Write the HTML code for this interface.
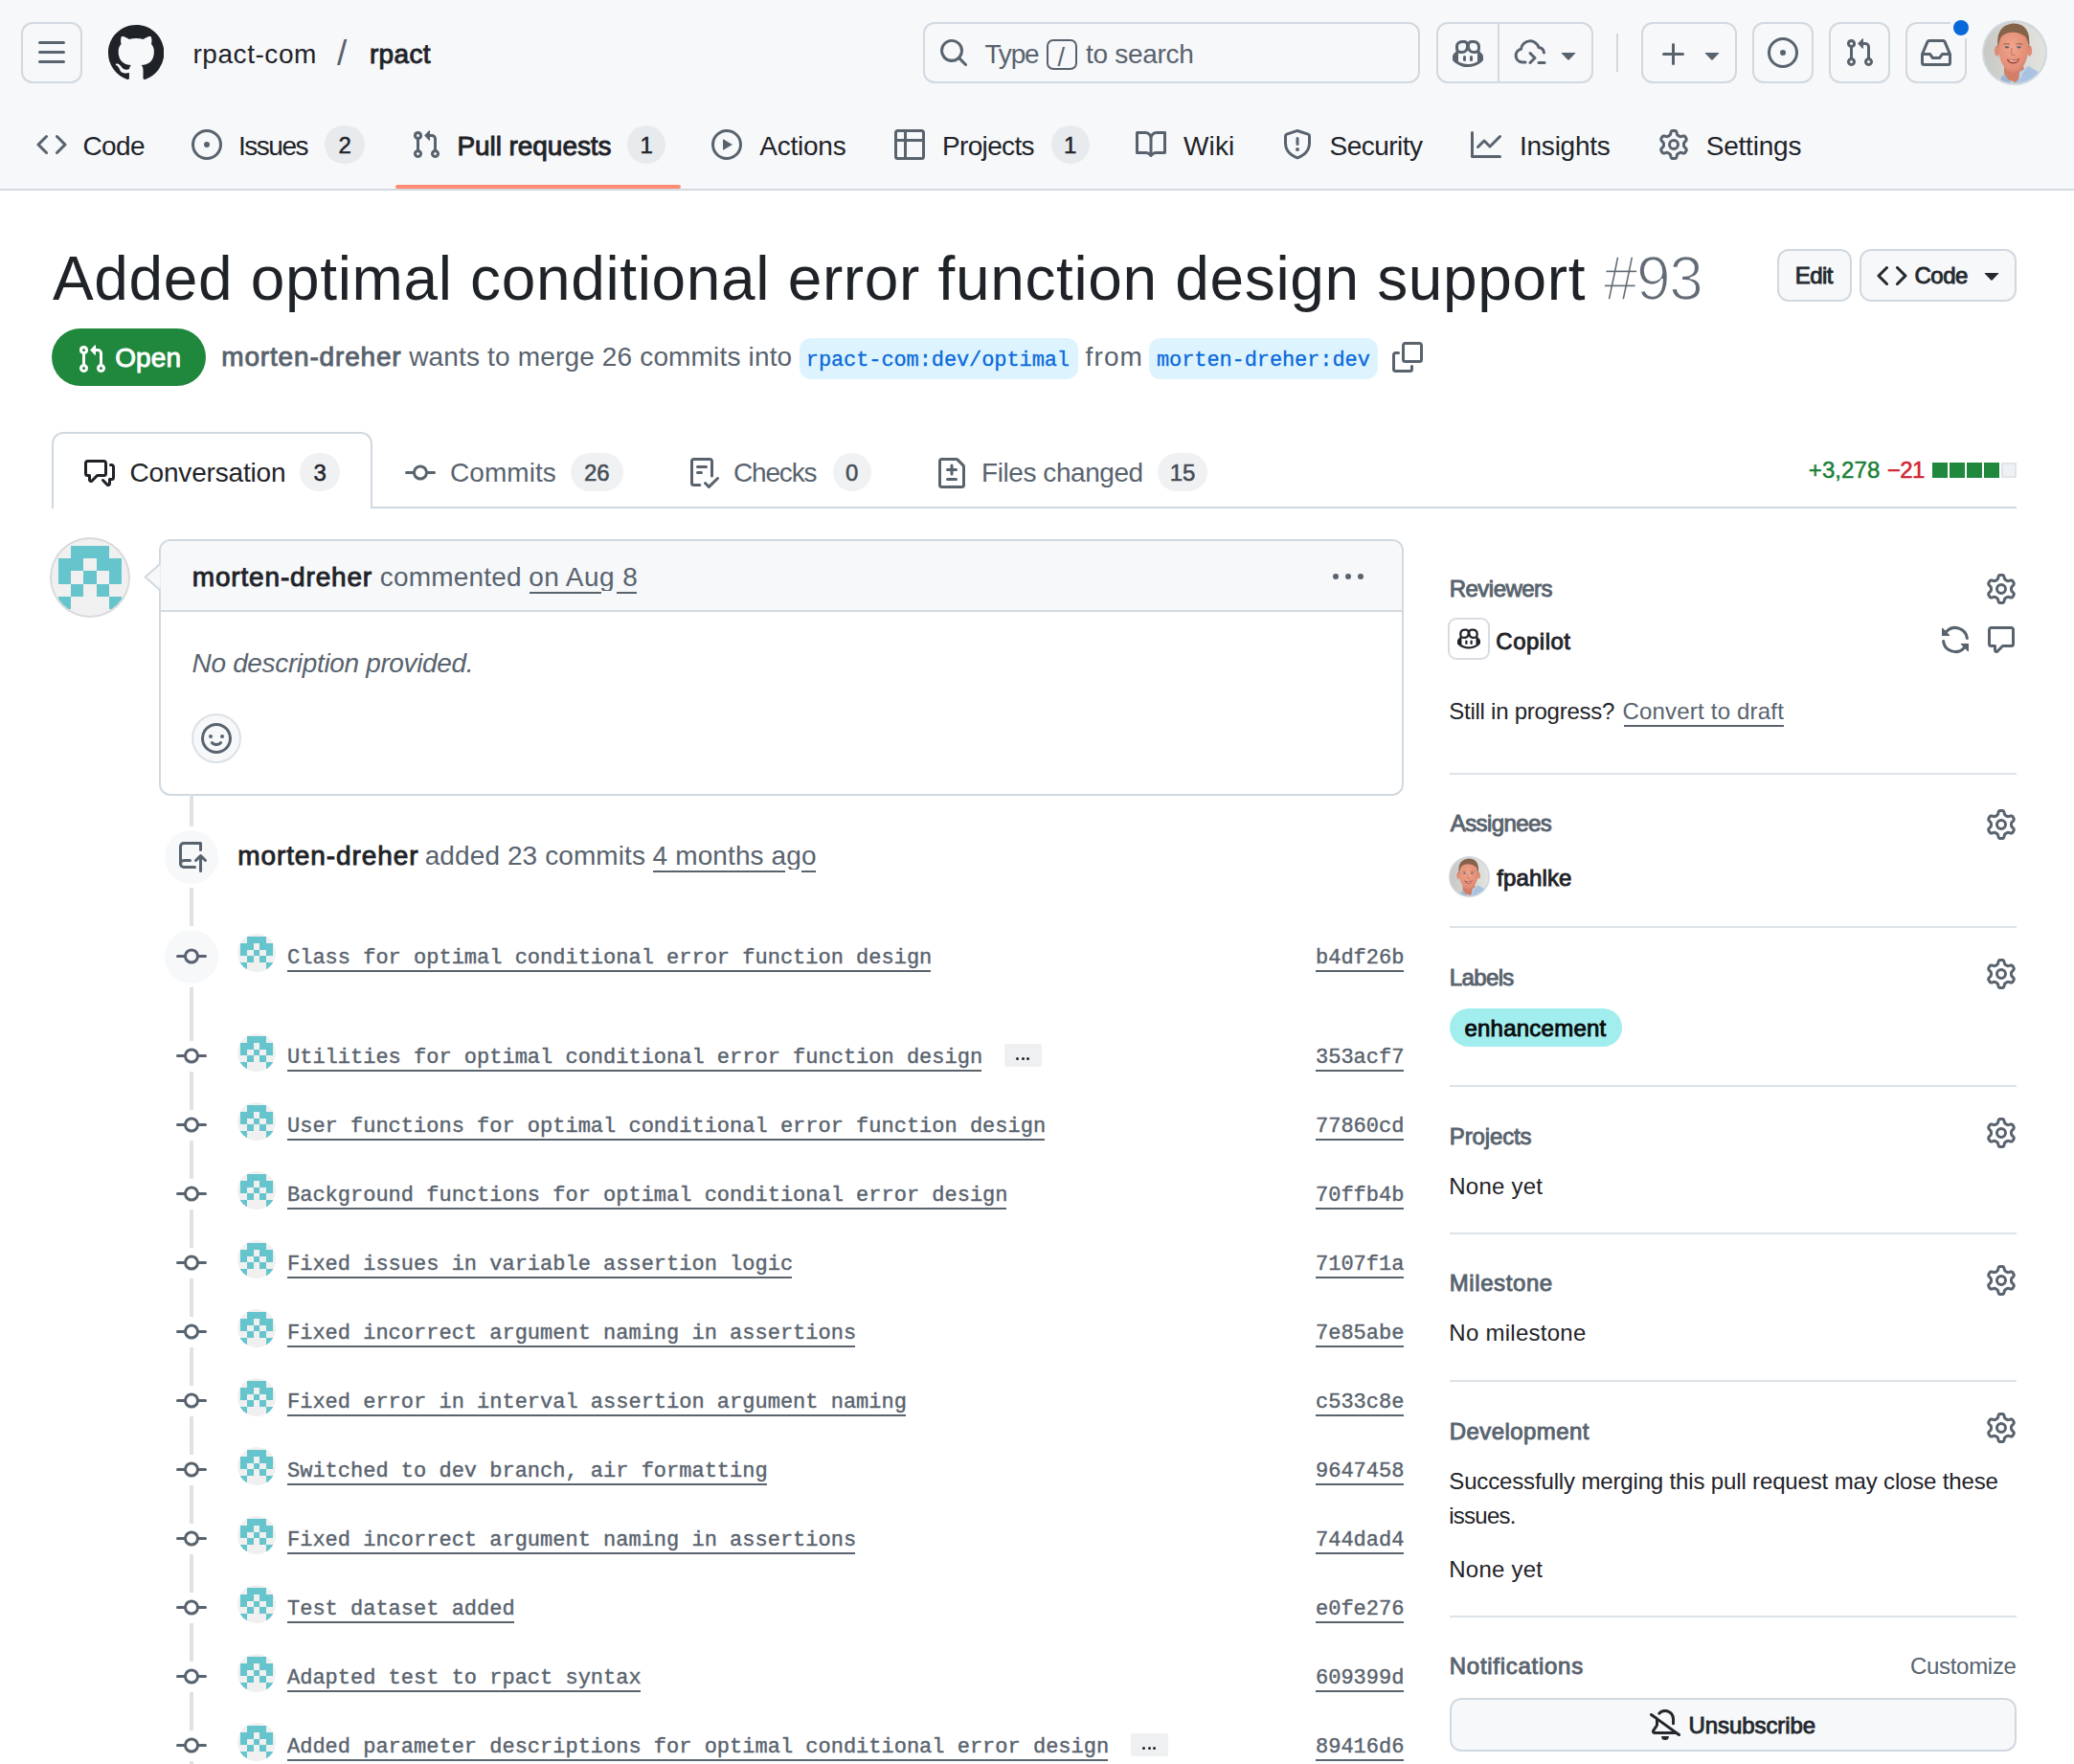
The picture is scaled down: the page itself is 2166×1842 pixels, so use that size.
<!DOCTYPE html>
<html><head><meta charset="utf-8"><title>PR</title><style>html,body{margin:0;padding:0}
body{width:2166px;height:1842px;position:relative;overflow:hidden;background:#fff;font-family:"Liberation Sans",sans-serif}
.b,.i,.t{position:absolute;box-sizing:border-box}
.t{white-space:pre;line-height:1;font-kerning:normal}
</style></head><body>
<div class="b" style="left:0px;top:0px;width:2166px;height:197px;background:#f6f8fa"></div>
<div class="b" style="left:0px;top:197px;width:2166px;height:2px;background:#d1d9e0"></div>
<div class="b" style="left:22px;top:23px;width:64px;height:64px;border:2px solid #d1d9e0;border-radius:12px;background:transparent"></div>
<svg class="i" style="left:38px;top:39px" width="32" height="32" viewBox="0 0 16 16" fill="#59636e"><path fill-rule="evenodd" d="M1 2.75A.75.75 0 0 1 1.75 2h12.5a.75.75 0 0 1 0 1.5H1.75A.75.75 0 0 1 1 2.75Zm0 5A.75.75 0 0 1 1.75 7h12.5a.75.75 0 0 1 0 1.5H1.75A.75.75 0 0 1 1 7.75ZM1.75 12h12.5a.75.75 0 0 1 0 1.5H1.75a.75.75 0 0 1 0-1.5Z"/></svg>
<svg class="i" style="left:112.8px;top:25.7px" width="58.4" height="58.4" viewBox="0 0 16 16" fill="#1f2328"><path fill-rule="evenodd" d="M8 0c4.42 0 8 3.58 8 8a8.013 8.013 0 0 1-5.45 7.59c-.4.08-.55-.17-.55-.38 0-.27.01-1.13.01-2.2 0-.75-.25-1.23-.54-1.48 1.78-.2 3.65-.88 3.65-3.95 0-.88-.31-1.59-.82-2.15.08-.2.36-1.02-.08-2.12 0 0-.67-.22-2.2.82-.64-.18-1.32-.27-2-.27-.68 0-1.36.09-2 .27-1.53-1.03-2.2-.82-2.2-.82-.44 1.1-.16 1.92-.08 2.12-.51.56-.82 1.28-.82 2.15 0 3.06 1.86 3.75 3.64 3.95-.23.2-.44.55-.51 1.07-.46.21-1.61.55-2.33-.66-.15-.24-.6-.83-1.23-.82-.67.01-.27.38.01.53.34.19.73.9.82 1.13.16.45.68 1.31 2.69.94 0 .67.01 1.3.01 1.49 0 .21-.15.45-.55.38A7.995 7.995 0 0 1 0 8c0-4.42 3.58-8 8-8Z"/></svg>
<span class="t" style="left:201.5px;top:42.90px;font-size:28px;color:#1f2328;letter-spacing:0.544px">rpact-com</span>
<span class="t" style="left:352px;top:37.28px;font-size:37px;color:#59636e">/</span>
<span class="t" style="left:385.95px;top:42.90px;font-size:28px;color:#1f2328;-webkit-text-stroke:0.9px #1f2328;letter-spacing:0.358px">rpact</span>
<div class="b" style="left:964px;top:23px;width:519px;height:64px;border:2px solid #d1d9e0;border-radius:12px;background:transparent"></div>
<svg class="i" style="left:980px;top:39px" width="32" height="32" viewBox="0 0 16 16" fill="#59636e"><path fill-rule="evenodd" d="M10.68 11.74a6 6 0 0 1-7.922-8.982 6 6 0 0 1 8.982 7.922l3.04 3.04a.749.749 0 0 1-.326 1.275.749.749 0 0 1-.734-.215ZM11.5 7a4.499 4.499 0 1 0-8.997 0A4.499 4.499 0 0 0 11.5 7Z"/></svg>
<span class="t" style="left:1028.5px;top:42.90px;font-size:28px;color:#59636e;letter-spacing:-1.210px">Type</span>
<div class="b" style="left:1093.2px;top:41px;width:31.6px;height:32px;border:2px solid #59636e;border-radius:7px"></div>
<span class="t" style="left:1104.6px;top:47.14px;font-size:27px;color:#59636e">/</span>
<span class="t" style="left:1133.9px;top:42.90px;font-size:28px;color:#59636e;letter-spacing:-0.275px">to search</span>
<div class="b" style="left:1500px;top:23px;width:164px;height:64px;border:2px solid #d1d9e0;border-radius:12px;background:transparent"></div>
<div class="b" style="left:1564px;top:25px;width:2px;height:60px;background:#d1d9e0"></div>
<svg class="i" style="left:1517px;top:39.5px" width="32" height="32" viewBox="0 0 16 16" fill="#59636e"><path fill-rule="evenodd" d="M7.998 15.035c-4.562 0-7.873-2.914-7.998-3.749V9.338c.085-.628.677-1.686 1.588-2.065.013-.07.024-.143.036-.218.029-.183.06-.384.126-.612-.201-.508-.254-1.084-.254-1.656 0-.87.128-1.769.693-2.484.579-.733 1.494-1.124 2.724-1.261 1.206-.134 2.262.034 2.944.765.05.053.096.108.139.165.044-.057.094-.112.143-.165.682-.731 1.738-.899 2.944-.765 1.23.137 2.145.528 2.724 1.261.566.715.693 1.614.693 2.484 0 .572-.053 1.148-.254 1.656.066.228.098.429.126.612.012.076.024.148.037.218.924.385 1.522 1.471 1.591 2.095v1.872c0 .766-3.351 3.795-8.002 3.795Zm0-1.485c2.28 0 4.584-1.11 5.002-1.433V7.862l-.023-.116c-.49.21-1.075.291-1.727.291-1.146 0-2.059-.327-2.71-.991A3.222 3.222 0 0 1 8 6.303a3.24 3.24 0 0 1-.544.743c-.65.664-1.563.991-2.71.991-.652 0-1.236-.081-1.727-.291l-.023.116v4.255c.419.323 2.722 1.433 5.002 1.433ZM6.762 2.83c-.193-.206-.637-.413-1.682-.297-1.019.113-1.479.404-1.713.7-.247.312-.369.789-.369 1.554 0 .793.129 1.171.308 1.371.162.181.519.379 1.442.379.853 0 1.339-.235 1.638-.54.315-.322.527-.827.617-1.553.117-.935-.037-1.395-.241-1.614Zm4.155-.297c-1.044-.116-1.488.091-1.681.297-.204.219-.359.679-.242 1.614.091.726.303 1.231.618 1.553.299.305.784.54 1.638.54.922 0 1.28-.198 1.442-.379.179-.2.308-.578.308-1.371 0-.765-.123-1.242-.37-1.554-.233-.296-.693-.587-1.713-.7ZM6.25 9.037a.75.75 0 0 1 .75.75v1.501a.75.75 0 0 1-1.5 0V9.787a.75.75 0 0 1 .75-.75Zm4.25.75v1.501a.75.75 0 0 1-1.5 0V9.787a.75.75 0 0 1 1.5 0Z"/></svg>
<svg class="i" style="left:1581px;top:39px" width="34" height="30" viewBox="0 0 34 30" fill="none" stroke="#59636e" stroke-width="3" stroke-linecap="round" stroke-linejoin="round"><path d="M12 26 H9 A7 7 0 0 1 7.500 12.200 A9.500 9.500 0 0 1 26 10.500 A6.500 6.500 0 0 1 31.500 16"/><path d="M17 16.500 L22 21.500 L17 26.500"/><path d="M26 26.500 H32"/></svg>
<svg class="i" style="left:1622px;top:41px" width="32" height="32" viewBox="0 0 16 16" fill="#59636e"><path fill-rule="evenodd" d="m4.427 7.427 3.396 3.396a.25.25 0 0 0 .354 0l3.396-3.396A.25.25 0 0 0 11.396 7H4.604a.25.25 0 0 0-.177.427Z"/></svg>
<div class="b" style="left:1688px;top:35px;width:2px;height:40px;background:#d1d9e0"></div>
<div class="b" style="left:1714px;top:23px;width:100px;height:64px;border:2px solid #d1d9e0;border-radius:12px;background:transparent"></div>
<svg class="i" style="left:1732px;top:41px" width="32" height="32" viewBox="0 0 16 16" fill="#59636e"><path fill-rule="evenodd" d="M7.75 2a.75.75 0 0 1 .75.75V7h4.25a.75.75 0 0 1 0 1.5H8.5v4.25a.75.75 0 0 1-1.500 0V8.5H2.75a.75.75 0 0 1 0-1.5H7V2.75A.75.75 0 0 1 7.750 2Z"/></svg>
<svg class="i" style="left:1772px;top:41px" width="32" height="32" viewBox="0 0 16 16" fill="#59636e"><path fill-rule="evenodd" d="m4.427 7.427 3.396 3.396a.25.25 0 0 0 .354 0l3.396-3.396A.25.25 0 0 0 11.396 7H4.604a.25.25 0 0 0-.177.427Z"/></svg>
<div class="b" style="left:1830px;top:23px;width:64px;height:64px;border:2px solid #d1d9e0;border-radius:12px;background:transparent"></div>
<svg class="i" style="left:1846px;top:39px" width="32" height="32" viewBox="0 0 16 16" fill="#59636e"><path fill-rule="evenodd" d="M8 9.5a1.5 1.5 0 1 0 0-3 1.5 1.5 0 0 0 0 3ZM8 0a8 8 0 1 1 0 16A8 8 0 0 1 8 0ZM1.5 8a6.5 6.5 0 1 0 13 0 6.5 6.5 0 0 0-13 0Z"/></svg>
<div class="b" style="left:1910px;top:23px;width:64px;height:64px;border:2px solid #d1d9e0;border-radius:12px;background:transparent"></div>
<svg class="i" style="left:1926px;top:39px" width="32" height="32" viewBox="0 0 16 16" fill="#59636e"><path fill-rule="evenodd" d="M1.5 3.25a2.25 2.25 0 1 1 3 2.122v5.256a2.251 2.251 0 1 1-1.5 0V5.372A2.25 2.25 0 0 1 1.5 3.25Zm5.677-.177L9.573.677A.25.25 0 0 1 10 .854V2.5h1A2.5 2.5 0 0 1 13.5 5v5.628a2.251 2.251 0 1 1-1.5 0V5a1 1 0 0 0-1-1h-1v1.646a.25.25 0 0 1-.427.177L7.177 3.427a.25.25 0 0 1 0-.354ZM3.75 2.5a.75.75 0 1 0 0 1.5.75.75 0 0 0 0-1.5Zm0 9.5a.75.75 0 1 0 0 1.5.75.75 0 0 0 0-1.5Zm8.25.75a.75.75 0 1 0 1.5 0 .75.75 0 0 0-1.5 0Z"/></svg>
<div class="b" style="left:1990px;top:23px;width:64px;height:64px;border:2px solid #d1d9e0;border-radius:12px;background:transparent"></div>
<svg class="i" style="left:2006px;top:39px" width="32" height="32" viewBox="0 0 16 16" fill="#59636e"><path fill-rule="evenodd" d="M2.8 2.06A1.75 1.75 0 0 1 4.41 1h7.18c.7 0 1.333.417 1.61 1.06l2.74 6.395c.04.093.06.194.06.295v4.5A1.75 1.75 0 0 1 14.25 15H1.75A1.75 1.75 0 0 1 0 13.25v-4.5c0-.101.02-.202.06-.295Zm1.61.44a.25.25 0 0 0-.23.152L1.887 8H4.75a.75.75 0 0 1 .6.3L6.625 10h2.75l1.275-1.7a.75.75 0 0 1 .6-.3h2.863L11.82 2.652a.25.25 0 0 0-.23-.152Zm10.09 7h-2.875l-1.275 1.7a.75.75 0 0 1-.6.3h-3.5a.75.75 0 0 1-.6-.3L4.375 9.5H1.5v3.75c0 .138.112.25.25.25h12.5a.25.25 0 0 0 .25-.25Z"/></svg>
<div class="b" style="left:2036px;top:17px;width:24px;height:24px;background:#f6f8fa;border-radius:50%"></div>
<div class="b" style="left:2040px;top:21px;width:16px;height:16px;background:#0969da;border-radius:50%"></div>
<svg class="i" style="left:2070.0px;top:20.700000000000003px" width="68" height="68" viewBox="-2.0 -2.0 68.0 68.0"><defs><clipPath id="fc1"><circle cx="32" cy="32" r="32"/></clipPath><linearGradient id="fc1g" x1="0" x2="1" y1="0" y2="0"><stop offset="0" stop-color="#c8c8c4"/><stop offset="0.6" stop-color="#d9d9d5"/><stop offset="1" stop-color="#e2e2de"/></linearGradient><radialGradient id="fc1s" cx="0.45" cy="0.4" r="0.7"><stop offset="0" stop-color="#f0a58c"/><stop offset="0.7" stop-color="#e48f77"/><stop offset="1" stop-color="#cf7a64"/></radialGradient><filter id="fc1b" x="-10%" y="-10%" width="120%" height="120%"><feGaussianBlur stdDeviation="0.7"/></filter></defs><circle cx="32" cy="32" r="34.0" fill="#d0d7de"/><g clip-path="url(#fc1)"><rect width="64" height="64" fill="url(#fc1g)"/><g filter="url(#fc1b)"><path d="M38 52 L46.500 46 L57 52.500 L62 66 L26 70 Z" fill="#a9c3e3"/><path d="M15 66 L18.500 57 L23 53 L30 66 Z" fill="#9db6d8"/><path d="M21 45 L41 45 L42.500 53 L33 63 L25 60 L21 53 Z" fill="#d27f66"/><path d="M37 52 L45 47.500 L36 63 Z" fill="#bcd1ea"/><ellipse cx="13.600" cy="30" rx="2.600" ry="5.500" fill="#df8c74"/><ellipse cx="47.600" cy="30" rx="2.600" ry="5.500" fill="#df8c74"/><path d="M15 26 Q14.500 9 30.500 9 Q46.500 9 46 26 Q46.500 38 41 46 Q36 53 31 53 Q25 53 20.500 46 Q15 38 15 26 Z" fill="url(#fc1s)"/><path d="M14.800 28 Q11 4 30 1.600 Q50 1 47 28 Q46 20 43.500 15.500 Q37 10.500 30 10.800 Q22 11 18 15.500 Q15.500 20 14.800 28 Z" fill="#85634b"/><path d="M20.500 23.500 Q23.500 22 27 23.300 M33.500 23.300 Q37 22 40.500 23.500" stroke="#a0705a" stroke-width="1.200" fill="none"/><ellipse cx="24" cy="26.300" rx="2.300" ry="1.100" fill="#56627a"/><ellipse cx="36.500" cy="26.300" rx="2.300" ry="1.100" fill="#56627a"/><path d="M29 27 Q28 33 29.500 34.500 L33 34.500" stroke="#cf7a64" stroke-width="1.200" fill="none"/><path d="M23.500 38.500 Q30.500 41 37.500 38 Q35.500 43.500 30.500 43.500 Q25.500 43.500 23.500 38.500 Z" fill="#a8453d"/><path d="M25.500 39.600 Q30.500 41.300 36 39.400 Q34 41.800 30.500 41.800 Q27 41.800 25.500 39.600 Z" fill="#f1ddd0"/></g></g></svg>
<svg class="i" style="left:38px;top:135px" width="32" height="32" viewBox="0 0 16 16" fill="#59636e"><path fill-rule="evenodd" d="m11.28 3.22 4.25 4.25a.75.75 0 0 1 0 1.06l-4.25 4.25a.749.749 0 0 1-1.275-.326.749.749 0 0 1 .215-.734L13.94 8l-3.72-3.72a.749.749 0 0 1 .326-1.275.749.749 0 0 1 .734.215Zm-6.56 0a.751.751 0 0 1 1.042.018.751.751 0 0 1 .018 1.042L2.06 8l3.72 3.72a.749.749 0 0 1-.326 1.275.749.749 0 0 1-.734-.215L.47 8.53a.75.75 0 0 1 0-1.06Z"/></svg>
<span class="t" style="left:86.4px;top:139.30px;font-size:28px;color:#1f2328;letter-spacing:-0.588px">Code</span>
<svg class="i" style="left:200px;top:135px" width="32" height="32" viewBox="0 0 16 16" fill="#59636e"><path fill-rule="evenodd" d="M8 9.5a1.5 1.5 0 1 0 0-3 1.5 1.5 0 0 0 0 3ZM8 0a8 8 0 1 1 0 16A8 8 0 0 1 8 0ZM1.5 8a6.5 6.5 0 1 0 13 0 6.5 6.5 0 0 0-13 0Z"/></svg>
<span class="t" style="left:249px;top:139.30px;font-size:28px;color:#1f2328;letter-spacing:-1.485px">Issues</span>
<div class="b" style="left:339.4px;top:130.7px;width:41.60000000000002px;height:40px;border-radius:20.0px;background:#e8ebee;text-align:center;line-height:41px;font-size:24px;color:#1f2328;-webkit-text-stroke:0.5px #1f2328">2</div>
<svg class="i" style="left:429px;top:135px" width="32" height="32" viewBox="0 0 16 16" fill="#59636e"><path fill-rule="evenodd" d="M1.5 3.25a2.25 2.25 0 1 1 3 2.122v5.256a2.251 2.251 0 1 1-1.5 0V5.372A2.25 2.25 0 0 1 1.5 3.25Zm5.677-.177L9.573.677A.25.25 0 0 1 10 .854V2.5h1A2.5 2.5 0 0 1 13.5 5v5.628a2.251 2.251 0 1 1-1.5 0V5a1 1 0 0 0-1-1h-1v1.646a.25.25 0 0 1-.427.177L7.177 3.427a.25.25 0 0 1 0-.354ZM3.75 2.5a.75.75 0 1 0 0 1.5.75.75 0 0 0 0-1.5Zm0 9.5a.75.75 0 1 0 0 1.5.75.75 0 0 0 0-1.5Zm8.25.75a.75.75 0 1 0 1.5 0 .75.75 0 0 0-1.5 0Z"/></svg>
<span class="t" style="left:477.45px;top:139.30px;font-size:28px;color:#1f2328;-webkit-text-stroke:0.9px #1f2328;letter-spacing:-0.063px">Pull requests</span>
<div class="b" style="left:655.2px;top:130.7px;width:40.0px;height:40px;border-radius:20.0px;background:#e8ebee;text-align:center;line-height:41px;font-size:24px;color:#1f2328;-webkit-text-stroke:0.5px #1f2328">1</div>
<svg class="i" style="left:743px;top:135px" width="32" height="32" viewBox="0 0 16 16" fill="#59636e"><path fill-rule="evenodd" d="M8 0a8 8 0 1 1 0 16A8 8 0 0 1 8 0ZM1.5 8a6.5 6.5 0 1 0 13 0 6.5 6.5 0 0 0-13 0Zm4.879-2.773 4.264 2.559a.25.25 0 0 1 0 .428l-4.264 2.559A.25.25 0 0 1 6 10.559V5.442a.25.25 0 0 1 .379-.215Z"/></svg>
<span class="t" style="left:793.2px;top:139.30px;font-size:28px;color:#1f2328;letter-spacing:-0.220px">Actions</span>
<svg class="i" style="left:934px;top:135px" width="32" height="32" viewBox="0 0 16 16" fill="#59636e"><path fill-rule="evenodd" d="M0 1.75C0 .784.784 0 1.75 0h12.5C15.216 0 16 .784 16 1.75v12.5A1.75 1.75 0 0 1 14.25 16H1.75A1.75 1.75 0 0 1 0 14.25ZM6.5 6.5v8h7.75a.25.25 0 0 0 .25-.25V6.5Zm8-1.5V1.75a.25.25 0 0 0-.25-.25H6.5V5Zm-13 1.5v7.75c0 .138.112.25.25.25H5v-8ZM5 5V1.5H1.75a.25.25 0 0 0-.25.25V5Z"/></svg>
<span class="t" style="left:984px;top:139.30px;font-size:28px;color:#1f2328;letter-spacing:-0.664px">Projects</span>
<div class="b" style="left:1097.6px;top:130.7px;width:40.200000000000045px;height:40px;border-radius:20.0px;background:#e8ebee;text-align:center;line-height:41px;font-size:24px;color:#1f2328;-webkit-text-stroke:0.5px #1f2328">1</div>
<svg class="i" style="left:1186px;top:135px" width="32" height="32" viewBox="0 0 16 16" fill="#59636e"><path fill-rule="evenodd" d="M0 1.75A.75.75 0 0 1 .75 1h4.253c1.227 0 2.317.59 3 1.501A3.743 3.743 0 0 1 11.006 1h4.245a.75.75 0 0 1 .75.75v10.5a.75.75 0 0 1-.75.75h-4.507a2.25 2.25 0 0 0-1.591.659l-.622.621a.75.75 0 0 1-1.06 0l-.622-.621A2.25 2.25 0 0 0 5.258 13H.75a.75.75 0 0 1-.75-.75Zm7.251 10.324.004-5.073-.002-2.253A2.25 2.25 0 0 0 5.003 2.5H1.5v9h3.757a3.75 3.75 0 0 1 1.994.574ZM8.755 4.75l-.004 7.322a3.752 3.752 0 0 1 1.992-.572H14.5v-9h-3.495a2.25 2.25 0 0 0-2.25 2.25Z"/></svg>
<span class="t" style="left:1236px;top:139.30px;font-size:28px;color:#1f2328;letter-spacing:0.117px">Wiki</span>
<svg class="i" style="left:1339px;top:135px" width="32" height="32" viewBox="0 0 16 16" fill="#59636e"><path fill-rule="evenodd" d="M7.467.133a1.748 1.748 0 0 1 1.066 0l5.25 1.68A1.75 1.75 0 0 1 15 3.48V7c0 1.566-.32 3.182-1.303 4.682-.983 1.498-2.585 2.813-5.032 3.855a1.697 1.697 0 0 1-1.33 0c-2.447-1.042-4.049-2.357-5.032-3.855C1.32 10.182 1 8.566 1 7V3.48a1.75 1.75 0 0 1 1.217-1.667Zm.61 1.429a.25.25 0 0 0-.153 0l-5.25 1.68a.25.25 0 0 0-.174.238V7c0 1.358.275 2.666 1.057 3.86.784 1.194 2.121 2.34 4.366 3.297a.196.196 0 0 0 .154 0c2.245-.956 3.582-2.104 4.366-3.298C13.225 9.666 13.5 8.36 13.5 7V3.48a.251.251 0 0 0-.174-.237l-5.25-1.68ZM8.75 4.75v3a.75.75 0 0 1-1.5 0v-3a.75.75 0 0 1 1.5 0ZM9 10.5a1 1 0 1 1-2 0 1 1 0 0 1 2 0Z"/></svg>
<span class="t" style="left:1388.5px;top:139.30px;font-size:28px;color:#1f2328;letter-spacing:-0.521px">Security</span>
<svg class="i" style="left:1535.7px;top:135px" width="32" height="32" viewBox="0 0 16 16" fill="#59636e"><path fill-rule="evenodd" d="M1.5 1.75V13.5h13.75a.75.75 0 0 1 0 1.5H.75a.75.75 0 0 1-.75-.75V1.75a.75.75 0 0 1 1.5 0Zm14.28 2.53-5.25 5.25a.75.75 0 0 1-1.06 0L7 7.06 4.28 9.78a.751.751 0 0 1-1.042-.018.751.751 0 0 1-.018-1.042l3.25-3.25a.75.75 0 0 1 1.06 0L10 7.94l4.72-4.72a.751.751 0 0 1 1.042.018.751.751 0 0 1 .018 1.042Z"/></svg>
<span class="t" style="left:1587px;top:139.30px;font-size:28px;color:#1f2328;letter-spacing:-0.242px">Insights</span>
<svg class="i" style="left:1731.5px;top:135px" width="32" height="32" viewBox="0 0 16 16" fill="#59636e"><path fill-rule="evenodd" d="M8 0a8.2 8.2 0 0 1 .701.031C9.444.095 9.99.645 10.16 1.29l.288 1.107c.018.066.079.158.212.224.231.114.454.243.668.386.123.082.233.09.299.071l1.103-.303c.644-.176 1.392.021 1.82.63.27.385.506.792.704 1.218.315.675.111 1.422-.364 1.891l-.814.806c-.049.048-.098.147-.088.294.016.257.016.515 0 .772-.01.147.038.246.088.294l.814.806c.475.469.679 1.216.364 1.891a7.977 7.977 0 0 1-.704 1.217c-.428.61-1.176.807-1.82.63l-1.102-.302c-.067-.019-.177-.011-.3.071a5.909 5.909 0 0 1-.668.386c-.133.066-.194.158-.211.224l-.29 1.106c-.168.646-.715 1.196-1.458 1.26a8.006 8.006 0 0 1-1.402 0c-.743-.064-1.289-.614-1.458-1.26l-.289-1.106c-.018-.066-.079-.158-.212-.224a5.738 5.738 0 0 1-.668-.386c-.123-.082-.233-.09-.299-.071l-1.103.303c-.644.176-1.392-.021-1.82-.63a8.12 8.12 0 0 1-.704-1.218c-.315-.675-.111-1.422.363-1.891l.815-.806c.05-.048.098-.147.088-.294a6.214 6.214 0 0 1 0-.772c.01-.147-.038-.246-.088-.294l-.815-.806C.635 6.045.431 5.298.746 4.623a7.92 7.92 0 0 1 .704-1.217c.428-.61 1.176-.807 1.82-.63l1.102.302c.067.019.177.011.3-.071.214-.143.437-.272.668-.386.133-.066.194-.158.211-.224l.29-1.106C6.009.645 6.556.095 7.299.03 7.53.01 7.764 0 8 0Zm-.571 1.525c-.036.003-.108.036-.137.146l-.289 1.105c-.147.561-.549.967-.998 1.189-.173.086-.34.183-.5.29-.417.278-.97.423-1.529.27l-1.103-.303c-.109-.03-.175.016-.195.045-.22.312-.412.644-.573.99-.014.031-.021.11.059.19l.815.806c.411.406.562.957.53 1.456a4.709 4.709 0 0 0 0 .582c.032.499-.119 1.05-.53 1.456l-.815.806c-.081.08-.073.159-.059.19.162.346.353.677.573.989.02.03.085.076.195.046l1.102-.303c.56-.153 1.113-.008 1.53.27.161.107.328.204.501.29.447.222.85.629.997 1.189l.289 1.105c.029.109.101.143.137.146a6.6 6.6 0 0 0 1.142 0c.036-.003.108-.036.137-.146l.289-1.105c.147-.561.549-.967.998-1.189.173-.086.34-.183.5-.29.417-.278.97-.423 1.529-.27l1.103.303c.109.029.175-.016.195-.045.22-.313.411-.644.573-.99.014-.031.021-.11-.059-.19l-.815-.806c-.411-.406-.562-.957-.53-1.456a4.709 4.709 0 0 0 0-.582c-.032-.499.119-1.05.53-1.456l.815-.806c.081-.08.073-.159.059-.19a6.464 6.464 0 0 0-.573-.989c-.02-.03-.085-.076-.195-.046l-1.102.303c-.56.153-1.113.008-1.53-.27a4.44 4.44 0 0 0-.501-.29c-.447-.222-.85-.629-.997-1.189l-.289-1.105c-.029-.11-.101-.143-.137-.146a6.6 6.6 0 0 0-1.142 0ZM11 8a3 3 0 1 1-6 0 3 3 0 0 1 6 0ZM9.5 8a1.5 1.5 0 1 0-3.001.001A1.5 1.5 0 0 0 9.5 8Z"/></svg>
<span class="t" style="left:1781.7px;top:139.30px;font-size:28px;color:#1f2328;letter-spacing:-0.210px">Settings</span>
<div class="b" style="left:413px;top:192.5px;width:298px;height:4.5px;background:#fd8c73;border-radius:4px"></div>
<span class="t" style="left:55px;top:259.02px;font-size:64px;color:#1f2328;letter-spacing:0.651px">Added optimal conditional error function design support</span>
<span class="t" style="left:1674.8px;top:259.02px;font-size:64px;color:#636c76;-webkit-text-stroke:1.7px #fff;letter-spacing:-1.344px">#93</span>
<div class="b" style="left:1856px;top:259.5px;width:78px;height:55px;border:2px solid #d1d9e0;border-radius:12px;background:#f6f8fa"></div>
<span class="t" style="left:1874.8500000000001px;top:275.58px;font-size:24px;color:#25292e;-webkit-text-stroke:0.9px #25292e;letter-spacing:-0.596px">Edit</span>
<div class="b" style="left:1942px;top:259.5px;width:163.5px;height:55px;border:2px solid #d1d9e0;border-radius:12px;background:#f6f8fa"></div>
<svg class="i" style="left:1960.3px;top:271.5px" width="32" height="32" viewBox="0 0 16 16" fill="#25292e"><path fill-rule="evenodd" d="m11.28 3.22 4.25 4.25a.75.75 0 0 1 0 1.06l-4.25 4.25a.749.749 0 0 1-1.275-.326.749.749 0 0 1 .215-.734L13.94 8l-3.72-3.72a.749.749 0 0 1 .326-1.275.749.749 0 0 1 .734.215Zm-6.56 0a.751.751 0 0 1 1.042.018.751.751 0 0 1 .018 1.042L2.06 8l3.72 3.72a.749.749 0 0 1-.326 1.275.749.749 0 0 1-.734-.215L.47 8.53a.75.75 0 0 1 0-1.06Z"/></svg>
<span class="t" style="left:1999.55px;top:275.58px;font-size:24px;color:#25292e;-webkit-text-stroke:0.9px #25292e;letter-spacing:-0.542px">Code</span>
<svg class="i" style="left:2063.7px;top:270.5px" width="32" height="32" viewBox="0 0 16 16" fill="#25292e"><path fill-rule="evenodd" d="m4.427 7.427 3.396 3.396a.25.25 0 0 0 .354 0l3.396-3.396A.25.25 0 0 0 11.396 7H4.604a.25.25 0 0 0-.177.427Z"/></svg>
<div class="b" style="left:54px;top:343px;width:161px;height:60px;background:#1f883d;border-radius:30px"></div>
<svg class="i" style="left:79.6px;top:359.2px" width="32" height="32" viewBox="0 0 16 16" fill="#fff"><path fill-rule="evenodd" d="M1.5 3.25a2.25 2.25 0 1 1 3 2.122v5.256a2.251 2.251 0 1 1-1.5 0V5.372A2.25 2.25 0 0 1 1.5 3.25Zm5.677-.177L9.573.677A.25.25 0 0 1 10 .854V2.5h1A2.5 2.5 0 0 1 13.5 5v5.628a2.251 2.251 0 1 1-1.5 0V5a1 1 0 0 0-1-1h-1v1.646a.25.25 0 0 1-.427.177L7.177 3.427a.25.25 0 0 1 0-.354ZM3.75 2.5a.75.75 0 1 0 0 1.5.75.75 0 0 0 0-1.5Zm0 9.5a.75.75 0 1 0 0 1.5.75.75 0 0 0 0-1.5Zm8.25.75a.75.75 0 1 0 1.5 0 .75.75 0 0 0-1.5 0Z"/></svg>
<span class="t" style="left:120.15px;top:359.80px;font-size:28px;color:#fff;-webkit-text-stroke:0.9px #fff;letter-spacing:0.159px">Open</span>
<span class="t" style="left:231.25px;top:359.30px;font-size:28px;color:#59636e;-webkit-text-stroke:0.9px #59636e;letter-spacing:0.835px">morten-dreher</span>
<span class="t" style="left:427.2px;top:359.30px;font-size:28px;color:#59636e;letter-spacing:0.162px">wants to merge 26 commits into</span>
<div class="b" style="left:834.5px;top:353px;width:291px;height:43px;background:#ddf4ff;border-radius:12px"></div>
<span class="t" style="left:841.8px;top:365.83px;font-size:22px;color:#0969da;-webkit-text-stroke:0.3px #0969da;font-family:'Liberation Mono',monospace;letter-spacing:-0.100px">rpact-com:dev/optimal</span>
<span class="t" style="left:1133.6px;top:359.30px;font-size:28px;color:#59636e;letter-spacing:1.108px">from</span>
<div class="b" style="left:1200px;top:353px;width:239px;height:43px;background:#ddf4ff;border-radius:12px"></div>
<span class="t" style="left:1208px;top:365.83px;font-size:22px;color:#0969da;-webkit-text-stroke:0.3px #0969da;font-family:'Liberation Mono',monospace;letter-spacing:-0.100px">morten-dreher:dev</span>
<svg class="i" style="left:1453.7px;top:356.8px" width="32" height="32" viewBox="0 0 16 16" fill="#59636e"><path fill-rule="evenodd" d="M0 6.75C0 5.784.784 5 1.75 5h1.5a.75.75 0 0 1 0 1.5h-1.5a.25.25 0 0 0-.25.25v7.5c0 .138.112.25.25.25h7.5a.25.25 0 0 0 .25-.25v-1.5a.75.75 0 0 1 1.5 0v1.5A1.75 1.75 0 0 1 9.25 16h-7.5A1.75 1.75 0 0 1 0 14.25ZM5 1.75C5 .784 5.784 0 6.75 0h7.5C15.216 0 16 .784 16 1.75v7.5A1.75 1.75 0 0 1 14.25 11h-7.5A1.75 1.75 0 0 1 5 9.25Zm1.75-.25a.25.25 0 0 0-.25.25v7.5c0 .138.112.25.25.25h7.5a.25.25 0 0 0 .25-.25v-7.5a.25.25 0 0 0-.25-.25Z"/></svg>
<div class="b" style="left:54px;top:528.5px;width:2052px;height:2px;background:#d1d9e0"></div>
<div class="b" style="left:54px;top:451px;width:335px;height:79.5px;background:#fff;border:2px solid #d1d9e0;border-bottom:0;border-radius:12px 12px 0 0"></div>
<svg class="i" style="left:87.7px;top:478px" width="32" height="32" viewBox="0 0 16 16" fill="#1f2328"><path fill-rule="evenodd" d="M1.75 1h8.5c.966 0 1.75.784 1.75 1.75v5.5A1.75 1.75 0 0 1 10.25 10H7.061l-2.574 2.573A1.458 1.458 0 0 1 2 11.543V10h-.25A1.75 1.75 0 0 1 0 8.25v-5.5C0 1.784.784 1 1.75 1ZM1.5 2.75v5.5c0 .138.112.25.25.25h1a.75.75 0 0 1 .75.75v2.19l2.72-2.72a.749.749 0 0 1 .53-.22h3.5a.25.25 0 0 0 .25-.25v-5.5a.25.25 0 0 0-.25-.25h-8.5a.25.25 0 0 0-.25.25Zm13 2a.25.25 0 0 0-.25-.25h-.5a.75.75 0 0 1 0-1.5h.5c.966 0 1.75.784 1.75 1.75v5.5A1.75 1.75 0 0 1 14.25 12H14v1.543a1.458 1.458 0 0 1-2.487 1.03L9.22 12.28a.749.749 0 0 1 .326-1.275.749.749 0 0 1 .734.215l2.22 2.22v-2.19a.75.75 0 0 1 .75-.75h1a.25.25 0 0 0 .25-.25Z"/></svg>
<span class="t" style="left:135.5px;top:480.30px;font-size:28px;color:#1f2328;letter-spacing:-0.173px">Conversation</span>
<div class="b" style="left:313.3px;top:472.7px;width:41.69999999999999px;height:40px;border-radius:20.0px;background:#eff1f3;text-align:center;line-height:41px;font-size:24px;color:#1f2328;-webkit-text-stroke:0.5px #1f2328">3</div>
<svg class="i" style="left:422.7px;top:478px" width="32" height="32" viewBox="0 0 16 16" fill="#59636e"><path fill-rule="evenodd" d="M11.93 8.5a4.002 4.002 0 0 1-7.86 0H.75a.75.75 0 0 1 0-1.5h3.32a4.002 4.002 0 0 1 7.86 0h3.32a.75.75 0 0 1 0 1.5Zm-1.43-.75a2.5 2.5 0 1 0-5 0 2.5 2.5 0 0 0 5 0Z"/></svg>
<span class="t" style="left:470px;top:480.30px;font-size:28px;color:#59636e;letter-spacing:0.060px">Commits</span>
<div class="b" style="left:596px;top:472.7px;width:54.60000000000002px;height:40px;border-radius:20.0px;background:#eff1f3;text-align:center;line-height:41px;font-size:24px;color:#454c54;-webkit-text-stroke:0.5px #454c54">26</div>
<svg class="i" style="left:718.6px;top:478px" width="32" height="32" viewBox="0 0 16 16" fill="#59636e"><path fill-rule="evenodd" d="M2.5 1.75v11.5c0 .138.112.25.25.25h3.17a.75.75 0 0 1 0 1.5H2.75A1.75 1.75 0 0 1 1 13.25V1.75C1 .784 1.784 0 2.75 0h8.5C12.216 0 13 .784 13 1.75v7.736a.75.75 0 0 1-1.5 0V1.75a.25.25 0 0 0-.25-.25h-8.5a.25.25 0 0 0-.25.25Zm13.274 9.537v-.001l-4.557 4.45a.75.75 0 0 1-1.055-.008l-1.943-1.95a.75.75 0 0 1 1.062-1.058l1.419 1.425 4.026-3.932a.75.75 0 1 1 1.048 1.074ZM4.75 4h4.5a.75.75 0 0 1 0 1.5h-4.5a.75.75 0 0 1 0-1.5ZM4 7.75A.75.75 0 0 1 4.750 7h2a.75.75 0 0 1 0 1.5h-2A.75.75 0 0 1 4 7.75Z"/></svg>
<span class="t" style="left:765.9px;top:480.30px;font-size:28px;color:#59636e;letter-spacing:-1.133px">Checks</span>
<div class="b" style="left:869.5px;top:472.7px;width:40.200000000000045px;height:40px;border-radius:20.0px;background:#eff1f3;text-align:center;line-height:41px;font-size:24px;color:#454c54;-webkit-text-stroke:0.5px #454c54">0</div>
<svg class="i" style="left:977.6px;top:478px" width="32" height="32" viewBox="0 0 16 16" fill="#59636e"><path fill-rule="evenodd" d="M1 1.75C1 .784 1.784 0 2.75 0h7.586c.464 0 .909.184 1.237.513l2.914 2.914c.329.328.513.773.513 1.237v9.586A1.75 1.75 0 0 1 13.25 16H2.75A1.75 1.75 0 0 1 1 14.25Zm1.75-.25a.25.25 0 0 0-.25.25v12.5c0 .138.112.25.25.25h10.5a.25.25 0 0 0 .25-.25V4.664a.25.25 0 0 0-.073-.177l-2.914-2.914a.25.25 0 0 0-.177-.073ZM8 3.25a.75.75 0 0 1 .75.75v1.5h1.5a.75.75 0 0 1 0 1.5h-1.5v1.5a.75.75 0 0 1-1.5 0V7h-1.5a.75.75 0 0 1 0-1.5h1.5V4A.75.75 0 0 1 8 3.25Zm-3 8a.75.75 0 0 1 .75-.75h4.5a.75.75 0 0 1 0 1.5h-4.5a.75.75 0 0 1-.75-.75Z"/></svg>
<span class="t" style="left:1025.1px;top:480.30px;font-size:28px;color:#59636e;letter-spacing:-0.438px">Files changed</span>
<div class="b" style="left:1209.4px;top:472.7px;width:51.299999999999955px;height:40px;border-radius:20.0px;background:#eff1f3;text-align:center;line-height:41px;font-size:24px;color:#454c54;-webkit-text-stroke:0.5px #454c54">15</div>
<span class="t" style="left:1888.8px;top:478.58px;font-size:24px;color:#1a7f37;-webkit-text-stroke:0.5px #1a7f37;letter-spacing:0.095px">+3,278</span>
<span class="t" style="left:1970.8px;top:478.58px;font-size:24px;color:#d1242f;-webkit-text-stroke:0.5px #d1242f;letter-spacing:-0.582px">−21</span>
<div class="b" style="left:2017.7px;top:482.5px;width:16px;height:16px;background:#1f883d"></div>
<div class="b" style="left:2035.7px;top:482.5px;width:16px;height:16px;background:#1f883d"></div>
<div class="b" style="left:2053.7px;top:482.5px;width:16px;height:16px;background:#1f883d"></div>
<div class="b" style="left:2071.7px;top:482.5px;width:16px;height:16px;background:#1f883d"></div>
<div class="b" style="left:2089.7px;top:482.5px;width:16px;height:16px;background:#eff2f5;border:2px solid #e0e4e9"></div>
<svg class="i" style="left:52.2px;top:561.3px" width="84" height="84" viewBox="-10.5 -10.5 441.0 441.0"><defs><clipPath id="ic2"><circle cx="210" cy="210" r="210"/></clipPath></defs><circle cx="210" cy="210" r="220.5" fill="#d9dadb"/><g clip-path="url(#ic2)"><rect width="420" height="420" fill="#f0f0f0"/><g fill="#66c4cc" shape-rendering="crispEdges"><rect x="105" y="35" width="70.5" height="70.5"/><rect x="175" y="35" width="70.5" height="70.5"/><rect x="245" y="35" width="70.5" height="70.5"/><rect x="35" y="105" width="70.5" height="70.5"/><rect x="105" y="105" width="70.5" height="70.5"/><rect x="245" y="105" width="70.5" height="70.5"/><rect x="315" y="105" width="70.5" height="70.5"/><rect x="35" y="175" width="70.5" height="70.5"/><rect x="175" y="175" width="70.5" height="70.5"/><rect x="315" y="175" width="70.5" height="70.5"/><rect x="105" y="245" width="70.5" height="70.5"/><rect x="245" y="245" width="70.5" height="70.5"/><rect x="35" y="315" width="70.5" height="70.5"/><rect x="315" y="315" width="70.5" height="70.5"/></g></g></svg>
<div class="b" style="left:166px;top:563px;width:1300px;height:268px;border:2px solid #d1d9e0;border-radius:12px;background:#fff"></div>
<div class="b" style="left:168px;top:565px;width:1296px;height:72px;background:#f6f8fa;border-radius:10px 10px 0 0"></div>
<div class="b" style="left:168px;top:636.5px;width:1296px;height:2px;background:#d1d9e0"></div>
<svg class="i" style="left:149.4px;top:586px" width="20" height="34" viewBox="0 0 20 34"><path d="M18.600 3.500 L3.600 16.600 L18.600 29.800 Z" fill="#f6f8fa"/><path d="M17.600 3.500 L2.600 16.600 L17.600 29.800" fill="none" stroke="#d1d9e0" stroke-width="2"/></svg>
<span class="t" style="left:200.75px;top:588.70px;font-size:28px;color:#1f2328;-webkit-text-stroke:0.9px #1f2328;letter-spacing:0.835px">morten-dreher</span>
<span class="t" style="left:396.8px;top:588.70px;font-size:28px;color:#59636e;letter-spacing:0.198px">commented</span>
<span class="t" style="left:552.2px;top:588.70px;font-size:28px;color:#59636e;letter-spacing:0.425px">on Aug 8</span>
<div class="b" style="left:552.7px;top:617.5px;width:112.7px;height:2px;background:#59636e"></div>
<div class="b" style="left:627.6px;top:617px;width:16.4px;height:3px;background:#f6f8fa"></div>
<svg class="i" style="left:1392px;top:586.7px" width="32" height="32" viewBox="0 0 16 16" fill="#59636e"><path fill-rule="evenodd" d="M8 9a1.5 1.5 0 1 0 0-3 1.5 1.5 0 0 0 0 3ZM1.5 9a1.5 1.5 0 1 0 0-3 1.5 1.5 0 0 0 0 3Zm13 0a1.5 1.5 0 1 0 0-3 1.5 1.5 0 0 0 0 3Z"/></svg>
<span class="t" style="left:200.6px;top:679.30px;font-size:28px;color:#59636e;font-style:italic;letter-spacing:-0.346px">No description provided.</span>
<div class="b" style="left:200px;top:745px;width:52px;height:52px;border:2px solid #dce1e6;border-radius:50%;background:#f6f8fa"></div>
<svg class="i" style="left:209.8px;top:755px" width="32" height="32" viewBox="0 0 16 16" fill="#59636e"><path fill-rule="evenodd" d="M8 0a8 8 0 1 1 0 16A8 8 0 0 1 8 0ZM1.5 8a6.5 6.5 0 1 0 13 0 6.5 6.5 0 0 0-13 0Zm3.82 1.636a.75.75 0 0 1 1.038.175l.007.009c.103.118.22.222.35.31.264.178.683.37 1.285.37.602 0 1.02-.192 1.285-.371.13-.088.247-.192.35-.31l.007-.008a.75.75 0 0 1 1.222.87l-.022-.015c.02.013.021.015.021.015v.001l-.001.002-.002.003-.005.007-.014.019a2.066 2.066 0 0 1-.184.213c-.16.166-.338.316-.53.445-.63.418-1.37.638-2.127.629-.946 0-1.652-.308-2.126-.63a3.331 3.331 0 0 1-.715-.657l-.014-.02-.005-.006-.002-.003v-.002h-.001l.613-.432-.614.43a.75.75 0 0 1 .183-1.044ZM12 7a1 1 0 1 1-2 0 1 1 0 0 1 2 0ZM5 8a1 1 0 1 1 0-2 1 1 0 0 1 0 2Z"/></svg>
<div class="b" style="left:198px;top:830px;width:4px;height:1012px;background:#dde2e7"></div>
<div class="b" style="left:168px;top:863px;width:64px;height:64px;background:#f6f8fa;border:4px solid #fff;border-radius:50%"></div>
<svg class="i" style="left:184.5px;top:879px" width="32" height="32" viewBox="0 0 16 16" fill="#59636e"><path fill-rule="evenodd" d="M1 2.5A2.5 2.5 0 0 1 3.5 0h8.75a.75.75 0 0 1 .75.75v3.5a.75.75 0 0 1-1.5 0V1.5h-8a1 1 0 0 0-1 1v6.708A2.493 2.493 0 0 1 3.5 9h3.25a.75.75 0 0 1 0 1.5H3.5a1 1 0 0 0 0 2h5.75a.75.75 0 0 1 0 1.5H3.5A2.5 2.5 0 0 1 1 11.5Zm13.23 7.79h-.001l-1.224-1.224v6.184a.75.75 0 0 1-1.5 0V9.066L10.28 10.29a.75.75 0 0 1-1.06-1.061l2.505-2.504a.75.75 0 0 1 1.06 0L15.29 9.23a.751.751 0 0 1-.018 1.042.751.751 0 0 1-1.042.018Z"/></svg>
<span class="t" style="left:248.25px;top:879.90px;font-size:28px;color:#1f2328;-webkit-text-stroke:0.9px #1f2328;letter-spacing:0.901px">morten-dreher</span>
<span class="t" style="left:443.7px;top:879.90px;font-size:28px;color:#59636e;letter-spacing:0.101px">added 23 commits</span>
<span class="t" style="left:681.6px;top:879.90px;font-size:28px;color:#59636e;letter-spacing:0.119px">4 months ago</span>
<div class="b" style="left:681.6px;top:908.7px;width:170.4px;height:2px;background:#59636e"></div>
<div class="b" style="left:820px;top:908px;width:16.6px;height:3px;background:#fff"></div>
<div class="b" style="left:168px;top:966.5px;width:64px;height:64px;background:#f6f8fa;border:4px solid #fff;border-radius:50%"></div>
<svg class="i" style="left:184px;top:983.0px" width="32" height="32" viewBox="0 0 16 16" fill="#59636e"><path fill-rule="evenodd" d="M11.93 8.5a4.002 4.002 0 0 1-7.86 0H.75a.75.75 0 0 1 0-1.5h3.32a4.002 4.002 0 0 1 7.86 0h3.32a.75.75 0 0 1 0 1.5Zm-1.43-.75a2.5 2.5 0 1 0-5 0 2.5 2.5 0 0 0 5 0Z"/></svg>
<svg class="i" style="left:247.8px;top:975.1px" width="40" height="40" viewBox="0.0 0.0 420.0 420.0"><defs><clipPath id="ic3"><circle cx="210" cy="210" r="210"/></clipPath></defs><g clip-path="url(#ic3)"><rect width="420" height="420" fill="#f0f0f0"/><g fill="#66c4cc" shape-rendering="crispEdges"><rect x="105" y="35" width="70.5" height="70.5"/><rect x="175" y="35" width="70.5" height="70.5"/><rect x="245" y="35" width="70.5" height="70.5"/><rect x="35" y="105" width="70.5" height="70.5"/><rect x="105" y="105" width="70.5" height="70.5"/><rect x="245" y="105" width="70.5" height="70.5"/><rect x="315" y="105" width="70.5" height="70.5"/><rect x="35" y="175" width="70.5" height="70.5"/><rect x="175" y="175" width="70.5" height="70.5"/><rect x="315" y="175" width="70.5" height="70.5"/><rect x="105" y="245" width="70.5" height="70.5"/><rect x="245" y="245" width="70.5" height="70.5"/><rect x="35" y="315" width="70.5" height="70.5"/><rect x="315" y="315" width="70.5" height="70.5"/></g></g></svg>
<span class="t" style="left:300px;top:990.33px;font-size:22px;color:#59636e;-webkit-text-stroke:0.4px #59636e;font-family:'Liberation Mono',monospace">Class for optimal conditional error function design</span>
<div class="b" style="left:300px;top:1013.0px;width:672.1999999999999px;height:2px;background:#59636e"></div>
<span class="t" style="left:1374px;top:990.33px;font-size:22px;color:#59636e;-webkit-text-stroke:0.4px #59636e;font-family:'Liberation Mono',monospace">b4df26b</span>
<div class="b" style="left:1374px;top:1013.0px;width:91.89999999999999px;height:2px;background:#59636e"></div>
<div class="b" style="left:184px;top:1086.6px;width:32px;height:32px;background:#fff"></div>
<svg class="i" style="left:184px;top:1087.1px" width="32" height="32" viewBox="0 0 16 16" fill="#59636e"><path fill-rule="evenodd" d="M11.93 8.5a4.002 4.002 0 0 1-7.86 0H.75a.75.75 0 0 1 0-1.5h3.32a4.002 4.002 0 0 1 7.86 0h3.32a.75.75 0 0 1 0 1.5Zm-1.43-.75a2.5 2.5 0 1 0-5 0 2.5 2.5 0 0 0 5 0Z"/></svg>
<svg class="i" style="left:247.8px;top:1079.1999999999998px" width="40" height="40" viewBox="0.0 0.0 420.0 420.0"><defs><clipPath id="ic4"><circle cx="210" cy="210" r="210"/></clipPath></defs><g clip-path="url(#ic4)"><rect width="420" height="420" fill="#f0f0f0"/><g fill="#66c4cc" shape-rendering="crispEdges"><rect x="105" y="35" width="70.5" height="70.5"/><rect x="175" y="35" width="70.5" height="70.5"/><rect x="245" y="35" width="70.5" height="70.5"/><rect x="35" y="105" width="70.5" height="70.5"/><rect x="105" y="105" width="70.5" height="70.5"/><rect x="245" y="105" width="70.5" height="70.5"/><rect x="315" y="105" width="70.5" height="70.5"/><rect x="35" y="175" width="70.5" height="70.5"/><rect x="175" y="175" width="70.5" height="70.5"/><rect x="315" y="175" width="70.5" height="70.5"/><rect x="105" y="245" width="70.5" height="70.5"/><rect x="245" y="245" width="70.5" height="70.5"/><rect x="35" y="315" width="70.5" height="70.5"/><rect x="315" y="315" width="70.5" height="70.5"/></g></g></svg>
<span class="t" style="left:300px;top:1094.43px;font-size:22px;color:#59636e;-webkit-text-stroke:0.4px #59636e;font-family:'Liberation Mono',monospace">Utilities for optimal conditional error function design</span>
<div class="b" style="left:300px;top:1117.1px;width:725.0px;height:2px;background:#59636e"></div>
<div class="b" style="left:1049.0px;top:1090.1px;width:39px;height:24px;background:#eef0f2;border-radius:2px"></div>
<div class="b" style="left:1061.0px;top:1104.1px;width:3.2px;height:3.2px;background:#1f2328;border-radius:50%"></div>
<div class="b" style="left:1066.5px;top:1104.1px;width:3.2px;height:3.2px;background:#1f2328;border-radius:50%"></div>
<div class="b" style="left:1072.0px;top:1104.1px;width:3.2px;height:3.2px;background:#1f2328;border-radius:50%"></div>
<span class="t" style="left:1374px;top:1094.43px;font-size:22px;color:#59636e;-webkit-text-stroke:0.4px #59636e;font-family:'Liberation Mono',monospace">353acf7</span>
<div class="b" style="left:1374px;top:1117.1px;width:91.89999999999999px;height:2px;background:#59636e"></div>
<div class="b" style="left:184px;top:1158.6px;width:32px;height:32px;background:#fff"></div>
<svg class="i" style="left:184px;top:1159.1px" width="32" height="32" viewBox="0 0 16 16" fill="#59636e"><path fill-rule="evenodd" d="M11.93 8.5a4.002 4.002 0 0 1-7.86 0H.75a.75.75 0 0 1 0-1.5h3.32a4.002 4.002 0 0 1 7.86 0h3.32a.75.75 0 0 1 0 1.5Zm-1.43-.75a2.5 2.5 0 1 0-5 0 2.5 2.5 0 0 0 5 0Z"/></svg>
<svg class="i" style="left:247.8px;top:1151.1999999999998px" width="40" height="40" viewBox="0.0 0.0 420.0 420.0"><defs><clipPath id="ic5"><circle cx="210" cy="210" r="210"/></clipPath></defs><g clip-path="url(#ic5)"><rect width="420" height="420" fill="#f0f0f0"/><g fill="#66c4cc" shape-rendering="crispEdges"><rect x="105" y="35" width="70.5" height="70.5"/><rect x="175" y="35" width="70.5" height="70.5"/><rect x="245" y="35" width="70.5" height="70.5"/><rect x="35" y="105" width="70.5" height="70.5"/><rect x="105" y="105" width="70.5" height="70.5"/><rect x="245" y="105" width="70.5" height="70.5"/><rect x="315" y="105" width="70.5" height="70.5"/><rect x="35" y="175" width="70.5" height="70.5"/><rect x="175" y="175" width="70.5" height="70.5"/><rect x="315" y="175" width="70.5" height="70.5"/><rect x="105" y="245" width="70.5" height="70.5"/><rect x="245" y="245" width="70.5" height="70.5"/><rect x="35" y="315" width="70.5" height="70.5"/><rect x="315" y="315" width="70.5" height="70.5"/></g></g></svg>
<span class="t" style="left:300px;top:1166.43px;font-size:22px;color:#59636e;-webkit-text-stroke:0.4px #59636e;font-family:'Liberation Mono',monospace">User functions for optimal conditional error function design</span>
<div class="b" style="left:300px;top:1189.1px;width:791.0px;height:2px;background:#59636e"></div>
<span class="t" style="left:1374px;top:1166.43px;font-size:22px;color:#59636e;-webkit-text-stroke:0.4px #59636e;font-family:'Liberation Mono',monospace">77860cd</span>
<div class="b" style="left:1374px;top:1189.1px;width:91.89999999999999px;height:2px;background:#59636e"></div>
<div class="b" style="left:184px;top:1230.6px;width:32px;height:32px;background:#fff"></div>
<svg class="i" style="left:184px;top:1231.1px" width="32" height="32" viewBox="0 0 16 16" fill="#59636e"><path fill-rule="evenodd" d="M11.93 8.5a4.002 4.002 0 0 1-7.86 0H.75a.75.75 0 0 1 0-1.5h3.32a4.002 4.002 0 0 1 7.86 0h3.32a.75.75 0 0 1 0 1.5Zm-1.43-.75a2.5 2.5 0 1 0-5 0 2.5 2.5 0 0 0 5 0Z"/></svg>
<svg class="i" style="left:247.8px;top:1223.1999999999998px" width="40" height="40" viewBox="0.0 0.0 420.0 420.0"><defs><clipPath id="ic6"><circle cx="210" cy="210" r="210"/></clipPath></defs><g clip-path="url(#ic6)"><rect width="420" height="420" fill="#f0f0f0"/><g fill="#66c4cc" shape-rendering="crispEdges"><rect x="105" y="35" width="70.5" height="70.5"/><rect x="175" y="35" width="70.5" height="70.5"/><rect x="245" y="35" width="70.5" height="70.5"/><rect x="35" y="105" width="70.5" height="70.5"/><rect x="105" y="105" width="70.5" height="70.5"/><rect x="245" y="105" width="70.5" height="70.5"/><rect x="315" y="105" width="70.5" height="70.5"/><rect x="35" y="175" width="70.5" height="70.5"/><rect x="175" y="175" width="70.5" height="70.5"/><rect x="315" y="175" width="70.5" height="70.5"/><rect x="105" y="245" width="70.5" height="70.5"/><rect x="245" y="245" width="70.5" height="70.5"/><rect x="35" y="315" width="70.5" height="70.5"/><rect x="315" y="315" width="70.5" height="70.5"/></g></g></svg>
<span class="t" style="left:300px;top:1238.43px;font-size:22px;color:#59636e;-webkit-text-stroke:0.4px #59636e;font-family:'Liberation Mono',monospace">Background functions for optimal conditional error design</span>
<div class="b" style="left:300px;top:1261.1px;width:751.4px;height:2px;background:#59636e"></div>
<span class="t" style="left:1374px;top:1238.43px;font-size:22px;color:#59636e;-webkit-text-stroke:0.4px #59636e;font-family:'Liberation Mono',monospace">70ffb4b</span>
<div class="b" style="left:1374px;top:1261.1px;width:91.89999999999999px;height:2px;background:#59636e"></div>
<div class="b" style="left:184px;top:1302.6px;width:32px;height:32px;background:#fff"></div>
<svg class="i" style="left:184px;top:1303.1px" width="32" height="32" viewBox="0 0 16 16" fill="#59636e"><path fill-rule="evenodd" d="M11.93 8.5a4.002 4.002 0 0 1-7.86 0H.75a.75.75 0 0 1 0-1.5h3.32a4.002 4.002 0 0 1 7.86 0h3.32a.75.75 0 0 1 0 1.5Zm-1.43-.75a2.5 2.5 0 1 0-5 0 2.5 2.5 0 0 0 5 0Z"/></svg>
<svg class="i" style="left:247.8px;top:1295.1999999999998px" width="40" height="40" viewBox="0.0 0.0 420.0 420.0"><defs><clipPath id="ic7"><circle cx="210" cy="210" r="210"/></clipPath></defs><g clip-path="url(#ic7)"><rect width="420" height="420" fill="#f0f0f0"/><g fill="#66c4cc" shape-rendering="crispEdges"><rect x="105" y="35" width="70.5" height="70.5"/><rect x="175" y="35" width="70.5" height="70.5"/><rect x="245" y="35" width="70.5" height="70.5"/><rect x="35" y="105" width="70.5" height="70.5"/><rect x="105" y="105" width="70.5" height="70.5"/><rect x="245" y="105" width="70.5" height="70.5"/><rect x="315" y="105" width="70.5" height="70.5"/><rect x="35" y="175" width="70.5" height="70.5"/><rect x="175" y="175" width="70.5" height="70.5"/><rect x="315" y="175" width="70.5" height="70.5"/><rect x="105" y="245" width="70.5" height="70.5"/><rect x="245" y="245" width="70.5" height="70.5"/><rect x="35" y="315" width="70.5" height="70.5"/><rect x="315" y="315" width="70.5" height="70.5"/></g></g></svg>
<span class="t" style="left:300px;top:1310.43px;font-size:22px;color:#59636e;-webkit-text-stroke:0.4px #59636e;font-family:'Liberation Mono',monospace">Fixed issues in variable assertion logic</span>
<div class="b" style="left:300px;top:1333.1px;width:527.0px;height:2px;background:#59636e"></div>
<span class="t" style="left:1374px;top:1310.43px;font-size:22px;color:#59636e;-webkit-text-stroke:0.4px #59636e;font-family:'Liberation Mono',monospace">7107f1a</span>
<div class="b" style="left:1374px;top:1333.1px;width:91.89999999999999px;height:2px;background:#59636e"></div>
<div class="b" style="left:184px;top:1374.6px;width:32px;height:32px;background:#fff"></div>
<svg class="i" style="left:184px;top:1375.1px" width="32" height="32" viewBox="0 0 16 16" fill="#59636e"><path fill-rule="evenodd" d="M11.93 8.5a4.002 4.002 0 0 1-7.86 0H.75a.75.75 0 0 1 0-1.5h3.32a4.002 4.002 0 0 1 7.86 0h3.32a.75.75 0 0 1 0 1.5Zm-1.43-.75a2.5 2.5 0 1 0-5 0 2.5 2.5 0 0 0 5 0Z"/></svg>
<svg class="i" style="left:247.8px;top:1367.1999999999998px" width="40" height="40" viewBox="0.0 0.0 420.0 420.0"><defs><clipPath id="ic8"><circle cx="210" cy="210" r="210"/></clipPath></defs><g clip-path="url(#ic8)"><rect width="420" height="420" fill="#f0f0f0"/><g fill="#66c4cc" shape-rendering="crispEdges"><rect x="105" y="35" width="70.5" height="70.5"/><rect x="175" y="35" width="70.5" height="70.5"/><rect x="245" y="35" width="70.5" height="70.5"/><rect x="35" y="105" width="70.5" height="70.5"/><rect x="105" y="105" width="70.5" height="70.5"/><rect x="245" y="105" width="70.5" height="70.5"/><rect x="315" y="105" width="70.5" height="70.5"/><rect x="35" y="175" width="70.5" height="70.5"/><rect x="175" y="175" width="70.5" height="70.5"/><rect x="315" y="175" width="70.5" height="70.5"/><rect x="105" y="245" width="70.5" height="70.5"/><rect x="245" y="245" width="70.5" height="70.5"/><rect x="35" y="315" width="70.5" height="70.5"/><rect x="315" y="315" width="70.5" height="70.5"/></g></g></svg>
<span class="t" style="left:300px;top:1382.43px;font-size:22px;color:#59636e;-webkit-text-stroke:0.4px #59636e;font-family:'Liberation Mono',monospace">Fixed incorrect argument naming in assertions</span>
<div class="b" style="left:300px;top:1405.1px;width:593.0px;height:2px;background:#59636e"></div>
<span class="t" style="left:1374px;top:1382.43px;font-size:22px;color:#59636e;-webkit-text-stroke:0.4px #59636e;font-family:'Liberation Mono',monospace">7e85abe</span>
<div class="b" style="left:1374px;top:1405.1px;width:91.89999999999999px;height:2px;background:#59636e"></div>
<div class="b" style="left:184px;top:1446.6px;width:32px;height:32px;background:#fff"></div>
<svg class="i" style="left:184px;top:1447.1px" width="32" height="32" viewBox="0 0 16 16" fill="#59636e"><path fill-rule="evenodd" d="M11.93 8.5a4.002 4.002 0 0 1-7.86 0H.75a.75.75 0 0 1 0-1.5h3.32a4.002 4.002 0 0 1 7.86 0h3.32a.75.75 0 0 1 0 1.5Zm-1.43-.75a2.5 2.5 0 1 0-5 0 2.5 2.5 0 0 0 5 0Z"/></svg>
<svg class="i" style="left:247.8px;top:1439.1999999999998px" width="40" height="40" viewBox="0.0 0.0 420.0 420.0"><defs><clipPath id="ic9"><circle cx="210" cy="210" r="210"/></clipPath></defs><g clip-path="url(#ic9)"><rect width="420" height="420" fill="#f0f0f0"/><g fill="#66c4cc" shape-rendering="crispEdges"><rect x="105" y="35" width="70.5" height="70.5"/><rect x="175" y="35" width="70.5" height="70.5"/><rect x="245" y="35" width="70.5" height="70.5"/><rect x="35" y="105" width="70.5" height="70.5"/><rect x="105" y="105" width="70.5" height="70.5"/><rect x="245" y="105" width="70.5" height="70.5"/><rect x="315" y="105" width="70.5" height="70.5"/><rect x="35" y="175" width="70.5" height="70.5"/><rect x="175" y="175" width="70.5" height="70.5"/><rect x="315" y="175" width="70.5" height="70.5"/><rect x="105" y="245" width="70.5" height="70.5"/><rect x="245" y="245" width="70.5" height="70.5"/><rect x="35" y="315" width="70.5" height="70.5"/><rect x="315" y="315" width="70.5" height="70.5"/></g></g></svg>
<span class="t" style="left:300px;top:1454.43px;font-size:22px;color:#59636e;-webkit-text-stroke:0.4px #59636e;font-family:'Liberation Mono',monospace">Fixed error in interval assertion argument naming</span>
<div class="b" style="left:300px;top:1477.1px;width:645.8px;height:2px;background:#59636e"></div>
<span class="t" style="left:1374px;top:1454.43px;font-size:22px;color:#59636e;-webkit-text-stroke:0.4px #59636e;font-family:'Liberation Mono',monospace">c533c8e</span>
<div class="b" style="left:1374px;top:1477.1px;width:91.89999999999999px;height:2px;background:#59636e"></div>
<div class="b" style="left:184px;top:1518.6px;width:32px;height:32px;background:#fff"></div>
<svg class="i" style="left:184px;top:1519.1px" width="32" height="32" viewBox="0 0 16 16" fill="#59636e"><path fill-rule="evenodd" d="M11.93 8.5a4.002 4.002 0 0 1-7.86 0H.75a.75.75 0 0 1 0-1.5h3.32a4.002 4.002 0 0 1 7.86 0h3.32a.75.75 0 0 1 0 1.5Zm-1.43-.75a2.5 2.5 0 1 0-5 0 2.5 2.5 0 0 0 5 0Z"/></svg>
<svg class="i" style="left:247.8px;top:1511.1999999999998px" width="40" height="40" viewBox="0.0 0.0 420.0 420.0"><defs><clipPath id="ic10"><circle cx="210" cy="210" r="210"/></clipPath></defs><g clip-path="url(#ic10)"><rect width="420" height="420" fill="#f0f0f0"/><g fill="#66c4cc" shape-rendering="crispEdges"><rect x="105" y="35" width="70.5" height="70.5"/><rect x="175" y="35" width="70.5" height="70.5"/><rect x="245" y="35" width="70.5" height="70.5"/><rect x="35" y="105" width="70.5" height="70.5"/><rect x="105" y="105" width="70.5" height="70.5"/><rect x="245" y="105" width="70.5" height="70.5"/><rect x="315" y="105" width="70.5" height="70.5"/><rect x="35" y="175" width="70.5" height="70.5"/><rect x="175" y="175" width="70.5" height="70.5"/><rect x="315" y="175" width="70.5" height="70.5"/><rect x="105" y="245" width="70.5" height="70.5"/><rect x="245" y="245" width="70.5" height="70.5"/><rect x="35" y="315" width="70.5" height="70.5"/><rect x="315" y="315" width="70.5" height="70.5"/></g></g></svg>
<span class="t" style="left:300px;top:1526.43px;font-size:22px;color:#59636e;-webkit-text-stroke:0.4px #59636e;font-family:'Liberation Mono',monospace">Switched to dev branch, air formatting</span>
<div class="b" style="left:300px;top:1549.1px;width:500.59999999999997px;height:2px;background:#59636e"></div>
<span class="t" style="left:1374px;top:1526.43px;font-size:22px;color:#59636e;-webkit-text-stroke:0.4px #59636e;font-family:'Liberation Mono',monospace">9647458</span>
<div class="b" style="left:1374px;top:1549.1px;width:91.89999999999999px;height:2px;background:#59636e"></div>
<div class="b" style="left:184px;top:1590.6px;width:32px;height:32px;background:#fff"></div>
<svg class="i" style="left:184px;top:1591.1px" width="32" height="32" viewBox="0 0 16 16" fill="#59636e"><path fill-rule="evenodd" d="M11.93 8.5a4.002 4.002 0 0 1-7.86 0H.75a.75.75 0 0 1 0-1.5h3.32a4.002 4.002 0 0 1 7.86 0h3.32a.75.75 0 0 1 0 1.5Zm-1.43-.75a2.5 2.5 0 1 0-5 0 2.5 2.5 0 0 0 5 0Z"/></svg>
<svg class="i" style="left:247.8px;top:1583.1999999999998px" width="40" height="40" viewBox="0.0 0.0 420.0 420.0"><defs><clipPath id="ic11"><circle cx="210" cy="210" r="210"/></clipPath></defs><g clip-path="url(#ic11)"><rect width="420" height="420" fill="#f0f0f0"/><g fill="#66c4cc" shape-rendering="crispEdges"><rect x="105" y="35" width="70.5" height="70.5"/><rect x="175" y="35" width="70.5" height="70.5"/><rect x="245" y="35" width="70.5" height="70.5"/><rect x="35" y="105" width="70.5" height="70.5"/><rect x="105" y="105" width="70.5" height="70.5"/><rect x="245" y="105" width="70.5" height="70.5"/><rect x="315" y="105" width="70.5" height="70.5"/><rect x="35" y="175" width="70.5" height="70.5"/><rect x="175" y="175" width="70.5" height="70.5"/><rect x="315" y="175" width="70.5" height="70.5"/><rect x="105" y="245" width="70.5" height="70.5"/><rect x="245" y="245" width="70.5" height="70.5"/><rect x="35" y="315" width="70.5" height="70.5"/><rect x="315" y="315" width="70.5" height="70.5"/></g></g></svg>
<span class="t" style="left:300px;top:1598.43px;font-size:22px;color:#59636e;-webkit-text-stroke:0.4px #59636e;font-family:'Liberation Mono',monospace">Fixed incorrect argument naming in assertions</span>
<div class="b" style="left:300px;top:1621.1px;width:593.0px;height:2px;background:#59636e"></div>
<span class="t" style="left:1374px;top:1598.43px;font-size:22px;color:#59636e;-webkit-text-stroke:0.4px #59636e;font-family:'Liberation Mono',monospace">744dad4</span>
<div class="b" style="left:1374px;top:1621.1px;width:91.89999999999999px;height:2px;background:#59636e"></div>
<div class="b" style="left:184px;top:1662.6px;width:32px;height:32px;background:#fff"></div>
<svg class="i" style="left:184px;top:1663.1px" width="32" height="32" viewBox="0 0 16 16" fill="#59636e"><path fill-rule="evenodd" d="M11.93 8.5a4.002 4.002 0 0 1-7.86 0H.75a.75.75 0 0 1 0-1.5h3.32a4.002 4.002 0 0 1 7.86 0h3.32a.75.75 0 0 1 0 1.5Zm-1.43-.75a2.5 2.5 0 1 0-5 0 2.5 2.5 0 0 0 5 0Z"/></svg>
<svg class="i" style="left:247.8px;top:1655.1999999999998px" width="40" height="40" viewBox="0.0 0.0 420.0 420.0"><defs><clipPath id="ic12"><circle cx="210" cy="210" r="210"/></clipPath></defs><g clip-path="url(#ic12)"><rect width="420" height="420" fill="#f0f0f0"/><g fill="#66c4cc" shape-rendering="crispEdges"><rect x="105" y="35" width="70.5" height="70.5"/><rect x="175" y="35" width="70.5" height="70.5"/><rect x="245" y="35" width="70.5" height="70.5"/><rect x="35" y="105" width="70.5" height="70.5"/><rect x="105" y="105" width="70.5" height="70.5"/><rect x="245" y="105" width="70.5" height="70.5"/><rect x="315" y="105" width="70.5" height="70.5"/><rect x="35" y="175" width="70.5" height="70.5"/><rect x="175" y="175" width="70.5" height="70.5"/><rect x="315" y="175" width="70.5" height="70.5"/><rect x="105" y="245" width="70.5" height="70.5"/><rect x="245" y="245" width="70.5" height="70.5"/><rect x="35" y="315" width="70.5" height="70.5"/><rect x="315" y="315" width="70.5" height="70.5"/></g></g></svg>
<span class="t" style="left:300px;top:1670.43px;font-size:22px;color:#59636e;-webkit-text-stroke:0.4px #59636e;font-family:'Liberation Mono',monospace">Test dataset added</span>
<div class="b" style="left:300px;top:1693.1px;width:236.6px;height:2px;background:#59636e"></div>
<span class="t" style="left:1374px;top:1670.43px;font-size:22px;color:#59636e;-webkit-text-stroke:0.4px #59636e;font-family:'Liberation Mono',monospace">e0fe276</span>
<div class="b" style="left:1374px;top:1693.1px;width:91.89999999999999px;height:2px;background:#59636e"></div>
<div class="b" style="left:184px;top:1734.6px;width:32px;height:32px;background:#fff"></div>
<svg class="i" style="left:184px;top:1735.1px" width="32" height="32" viewBox="0 0 16 16" fill="#59636e"><path fill-rule="evenodd" d="M11.93 8.5a4.002 4.002 0 0 1-7.86 0H.75a.75.75 0 0 1 0-1.5h3.32a4.002 4.002 0 0 1 7.86 0h3.32a.75.75 0 0 1 0 1.5Zm-1.43-.75a2.5 2.5 0 1 0-5 0 2.5 2.5 0 0 0 5 0Z"/></svg>
<svg class="i" style="left:247.8px;top:1727.1999999999998px" width="40" height="40" viewBox="0.0 0.0 420.0 420.0"><defs><clipPath id="ic13"><circle cx="210" cy="210" r="210"/></clipPath></defs><g clip-path="url(#ic13)"><rect width="420" height="420" fill="#f0f0f0"/><g fill="#66c4cc" shape-rendering="crispEdges"><rect x="105" y="35" width="70.5" height="70.5"/><rect x="175" y="35" width="70.5" height="70.5"/><rect x="245" y="35" width="70.5" height="70.5"/><rect x="35" y="105" width="70.5" height="70.5"/><rect x="105" y="105" width="70.5" height="70.5"/><rect x="245" y="105" width="70.5" height="70.5"/><rect x="315" y="105" width="70.5" height="70.5"/><rect x="35" y="175" width="70.5" height="70.5"/><rect x="175" y="175" width="70.5" height="70.5"/><rect x="315" y="175" width="70.5" height="70.5"/><rect x="105" y="245" width="70.5" height="70.5"/><rect x="245" y="245" width="70.5" height="70.5"/><rect x="35" y="315" width="70.5" height="70.5"/><rect x="315" y="315" width="70.5" height="70.5"/></g></g></svg>
<span class="t" style="left:300px;top:1742.43px;font-size:22px;color:#59636e;-webkit-text-stroke:0.4px #59636e;font-family:'Liberation Mono',monospace">Adapted test to rpact syntax</span>
<div class="b" style="left:300px;top:1765.1px;width:368.59999999999997px;height:2px;background:#59636e"></div>
<span class="t" style="left:1374px;top:1742.43px;font-size:22px;color:#59636e;-webkit-text-stroke:0.4px #59636e;font-family:'Liberation Mono',monospace">609399d</span>
<div class="b" style="left:1374px;top:1765.1px;width:91.89999999999999px;height:2px;background:#59636e"></div>
<div class="b" style="left:184px;top:1806.6px;width:32px;height:32px;background:#fff"></div>
<svg class="i" style="left:184px;top:1807.1px" width="32" height="32" viewBox="0 0 16 16" fill="#59636e"><path fill-rule="evenodd" d="M11.93 8.5a4.002 4.002 0 0 1-7.86 0H.75a.75.75 0 0 1 0-1.5h3.32a4.002 4.002 0 0 1 7.86 0h3.32a.75.75 0 0 1 0 1.5Zm-1.43-.75a2.5 2.5 0 1 0-5 0 2.5 2.5 0 0 0 5 0Z"/></svg>
<svg class="i" style="left:247.8px;top:1799.1999999999998px" width="40" height="40" viewBox="0.0 0.0 420.0 420.0"><defs><clipPath id="ic14"><circle cx="210" cy="210" r="210"/></clipPath></defs><g clip-path="url(#ic14)"><rect width="420" height="420" fill="#f0f0f0"/><g fill="#66c4cc" shape-rendering="crispEdges"><rect x="105" y="35" width="70.5" height="70.5"/><rect x="175" y="35" width="70.5" height="70.5"/><rect x="245" y="35" width="70.5" height="70.5"/><rect x="35" y="105" width="70.5" height="70.5"/><rect x="105" y="105" width="70.5" height="70.5"/><rect x="245" y="105" width="70.5" height="70.5"/><rect x="315" y="105" width="70.5" height="70.5"/><rect x="35" y="175" width="70.5" height="70.5"/><rect x="175" y="175" width="70.5" height="70.5"/><rect x="315" y="175" width="70.5" height="70.5"/><rect x="105" y="245" width="70.5" height="70.5"/><rect x="245" y="245" width="70.5" height="70.5"/><rect x="35" y="315" width="70.5" height="70.5"/><rect x="315" y="315" width="70.5" height="70.5"/></g></g></svg>
<span class="t" style="left:300px;top:1814.43px;font-size:22px;color:#59636e;-webkit-text-stroke:0.4px #59636e;font-family:'Liberation Mono',monospace">Added parameter descriptions for optimal conditional error design</span>
<div class="b" style="left:300px;top:1837.1px;width:857.0px;height:2px;background:#59636e"></div>
<div class="b" style="left:1181.0px;top:1810.1px;width:39px;height:24px;background:#eef0f2;border-radius:2px"></div>
<div class="b" style="left:1193.0px;top:1824.1px;width:3.2px;height:3.2px;background:#1f2328;border-radius:50%"></div>
<div class="b" style="left:1198.5px;top:1824.1px;width:3.2px;height:3.2px;background:#1f2328;border-radius:50%"></div>
<div class="b" style="left:1204.0px;top:1824.1px;width:3.2px;height:3.2px;background:#1f2328;border-radius:50%"></div>
<span class="t" style="left:1374px;top:1814.43px;font-size:22px;color:#59636e;-webkit-text-stroke:0.4px #59636e;font-family:'Liberation Mono',monospace">89416d6</span>
<div class="b" style="left:1374px;top:1837.1px;width:91.89999999999999px;height:2px;background:#59636e"></div>
<span class="t" style="left:1513.75px;top:602.78px;font-size:24px;color:#59636e;-webkit-text-stroke:0.9px #59636e;letter-spacing:-0.529px">Reviewers</span>
<svg class="i" style="left:2074px;top:598.7px" width="32" height="32" viewBox="0 0 16 16" fill="#59636e"><path fill-rule="evenodd" d="M8 0a8.2 8.2 0 0 1 .701.031C9.444.095 9.99.645 10.16 1.29l.288 1.107c.018.066.079.158.212.224.231.114.454.243.668.386.123.082.233.09.299.071l1.103-.303c.644-.176 1.392.021 1.82.63.27.385.506.792.704 1.218.315.675.111 1.422-.364 1.891l-.814.806c-.049.048-.098.147-.088.294.016.257.016.515 0 .772-.01.147.038.246.088.294l.814.806c.475.469.679 1.216.364 1.891a7.977 7.977 0 0 1-.704 1.217c-.428.61-1.176.807-1.82.63l-1.102-.302c-.067-.019-.177-.011-.3.071a5.909 5.909 0 0 1-.668.386c-.133.066-.194.158-.211.224l-.29 1.106c-.168.646-.715 1.196-1.458 1.26a8.006 8.006 0 0 1-1.402 0c-.743-.064-1.289-.614-1.458-1.26l-.289-1.106c-.018-.066-.079-.158-.212-.224a5.738 5.738 0 0 1-.668-.386c-.123-.082-.233-.09-.299-.071l-1.103.303c-.644.176-1.392-.021-1.82-.63a8.12 8.12 0 0 1-.704-1.218c-.315-.675-.111-1.422.363-1.891l.815-.806c.05-.048.098-.147.088-.294a6.214 6.214 0 0 1 0-.772c.01-.147-.038-.246-.088-.294l-.815-.806C.635 6.045.431 5.298.746 4.623a7.92 7.92 0 0 1 .704-1.217c.428-.61 1.176-.807 1.82-.63l1.102.302c.067.019.177.011.3-.071.214-.143.437-.272.668-.386.133-.066.194-.158.211-.224l.29-1.106C6.009.645 6.556.095 7.299.03 7.53.01 7.764 0 8 0Zm-.571 1.525c-.036.003-.108.036-.137.146l-.289 1.105c-.147.561-.549.967-.998 1.189-.173.086-.34.183-.5.29-.417.278-.97.423-1.529.27l-1.103-.303c-.109-.03-.175.016-.195.045-.22.312-.412.644-.573.99-.014.031-.021.11.059.19l.815.806c.411.406.562.957.53 1.456a4.709 4.709 0 0 0 0 .582c.032.499-.119 1.05-.53 1.456l-.815.806c-.081.08-.073.159-.059.19.162.346.353.677.573.989.02.03.085.076.195.046l1.102-.303c.56-.153 1.113-.008 1.53.27.161.107.328.204.501.29.447.222.85.629.997 1.189l.289 1.105c.029.109.101.143.137.146a6.6 6.6 0 0 0 1.142 0c.036-.003.108-.036.137-.146l.289-1.105c.147-.561.549-.967.998-1.189.173-.086.34-.183.5-.29.417-.278.97-.423 1.529-.27l1.103.303c.109.029.175-.016.195-.045.22-.313.411-.644.573-.99.014-.031.021-.11-.059-.19l-.815-.806c-.411-.406-.562-.957-.53-1.456a4.709 4.709 0 0 0 0-.582c-.032-.499.119-1.05.53-1.456l.815-.806c.081-.08.073-.159.059-.19a6.464 6.464 0 0 0-.573-.989c-.02-.03-.085-.076-.195-.046l-1.102.303c-.56.153-1.113.008-1.53-.27a4.44 4.44 0 0 0-.501-.29c-.447-.222-.85-.629-.997-1.189l-.289-1.105c-.029-.11-.101-.143-.137-.146a6.6 6.6 0 0 0-1.142 0ZM11 8a3 3 0 1 1-6 0 3 3 0 0 1 6 0ZM9.5 8a1.5 1.5 0 1 0-3.001.001A1.5 1.5 0 0 0 9.5 8Z"/></svg>
<div class="b" style="left:1511.6px;top:644.5px;width:44px;height:44px;border:2px solid #d8dce1;border-radius:9px;background:#fff"></div>
<svg class="i" style="left:1521.8px;top:654.8px" width="24" height="24" viewBox="0 0 16 16" fill="#1f2328"><path fill-rule="evenodd" d="M7.998 15.035c-4.562 0-7.873-2.914-7.998-3.749V9.338c.085-.628.677-1.686 1.588-2.065.013-.07.024-.143.036-.218.029-.183.06-.384.126-.612-.201-.508-.254-1.084-.254-1.656 0-.87.128-1.769.693-2.484.579-.733 1.494-1.124 2.724-1.261 1.206-.134 2.262.034 2.944.765.05.053.096.108.139.165.044-.057.094-.112.143-.165.682-.731 1.738-.899 2.944-.765 1.23.137 2.145.528 2.724 1.261.566.715.693 1.614.693 2.484 0 .572-.053 1.148-.254 1.656.066.228.098.429.126.612.012.076.024.148.037.218.924.385 1.522 1.471 1.591 2.095v1.872c0 .766-3.351 3.795-8.002 3.795Zm0-1.485c2.28 0 4.584-1.11 5.002-1.433V7.862l-.023-.116c-.49.21-1.075.291-1.727.291-1.146 0-2.059-.327-2.71-.991A3.222 3.222 0 0 1 8 6.303a3.24 3.24 0 0 1-.544.743c-.65.664-1.563.991-2.71.991-.652 0-1.236-.081-1.727-.291l-.023.116v4.255c.419.323 2.722 1.433 5.002 1.433ZM6.762 2.83c-.193-.206-.637-.413-1.682-.297-1.019.113-1.479.404-1.713.7-.247.312-.369.789-.369 1.554 0 .793.129 1.171.308 1.371.162.181.519.379 1.442.379.853 0 1.339-.235 1.638-.54.315-.322.527-.827.617-1.553.117-.935-.037-1.395-.241-1.614Zm4.155-.297c-1.044-.116-1.488.091-1.681.297-.204.219-.359.679-.242 1.614.091.726.303 1.231.618 1.553.299.305.784.54 1.638.54.922 0 1.28-.198 1.442-.379.179-.2.308-.578.308-1.371 0-.765-.123-1.242-.37-1.554-.233-.296-.693-.587-1.713-.7ZM6.25 9.037a.75.75 0 0 1 .75.75v1.501a.75.75 0 0 1-1.5 0V9.787a.75.75 0 0 1 .75-.75Zm4.25.75v1.501a.75.75 0 0 1-1.5 0V9.787a.75.75 0 0 1 1.5 0Z"/></svg>
<span class="t" style="left:1562.3500000000001px;top:658.48px;font-size:24px;color:#1f2328;-webkit-text-stroke:0.9px #1f2328;letter-spacing:0.493px">Copilot</span>
<svg class="i" style="left:2026px;top:652px" width="32" height="32" viewBox="0 0 16 16" fill="#59636e"><path fill-rule="evenodd" d="M1.705 8.005a.75.75 0 0 1 .834.656 5.5 5.5 0 0 0 9.592 2.97l-1.204-1.204a.25.25 0 0 1 .177-.427h3.646a.25.25 0 0 1 .25.25v3.646a.25.25 0 0 1-.427.177l-1.38-1.38A7.002 7.002 0 0 1 1.05 8.84a.75.75 0 0 1 .656-.834ZM8 2.5a5.487 5.487 0 0 0-4.131 1.869l1.204 1.204A.25.25 0 0 1 4.896 6H1.25A.25.25 0 0 1 1 5.75V2.104a.25.25 0 0 1 .427-.177l1.38 1.38A7.002 7.002 0 0 1 14.95 7.16a.75.75 0 0 1-1.49.178A5.5 5.5 0 0 0 8 2.5Z"/></svg>
<svg class="i" style="left:2074px;top:652px" width="32" height="32" viewBox="0 0 16 16" fill="#59636e"><path fill-rule="evenodd" d="M1 2.75C1 1.784 1.784 1 2.75 1h10.5c.966 0 1.75.784 1.75 1.75v7.5A1.75 1.75 0 0 1 13.25 12H9.06l-2.573 2.573A1.458 1.458 0 0 1 4 13.543V12H2.75A1.75 1.75 0 0 1 1 10.25Zm1.75-.25a.25.25 0 0 0-.25.25v7.5c0 .138.112.25.25.25h2a.75.75 0 0 1 .75.75v2.19l2.72-2.72a.749.749 0 0 1 .53-.22h4.5a.25.25 0 0 0 .25-.25v-7.5a.25.25 0 0 0-.25-.25Z"/></svg>
<span class="t" style="left:1513.3px;top:731.08px;font-size:24px;color:#1f2328;letter-spacing:-0.257px">Still in progress?</span>
<span class="t" style="left:1694.5px;top:731.08px;font-size:24px;color:#59636e;letter-spacing:0.197px">Convert to draft</span>
<div class="b" style="left:1695.5px;top:756.7px;width:167.7px;height:2px;background:#59636e"></div>
<div class="b" style="left:1514px;top:806.6px;width:592px;height:2px;background:#dde3e8"></div>
<span class="t" style="left:1514.75px;top:848.48px;font-size:24px;color:#59636e;-webkit-text-stroke:0.9px #59636e;letter-spacing:-0.579px">Assignees</span>
<svg class="i" style="left:2074px;top:845px" width="32" height="32" viewBox="0 0 16 16" fill="#59636e"><path fill-rule="evenodd" d="M8 0a8.2 8.2 0 0 1 .701.031C9.444.095 9.99.645 10.16 1.29l.288 1.107c.018.066.079.158.212.224.231.114.454.243.668.386.123.082.233.09.299.071l1.103-.303c.644-.176 1.392.021 1.82.63.27.385.506.792.704 1.218.315.675.111 1.422-.364 1.891l-.814.806c-.049.048-.098.147-.088.294.016.257.016.515 0 .772-.01.147.038.246.088.294l.814.806c.475.469.679 1.216.364 1.891a7.977 7.977 0 0 1-.704 1.217c-.428.61-1.176.807-1.82.63l-1.102-.302c-.067-.019-.177-.011-.3.071a5.909 5.909 0 0 1-.668.386c-.133.066-.194.158-.211.224l-.29 1.106c-.168.646-.715 1.196-1.458 1.26a8.006 8.006 0 0 1-1.402 0c-.743-.064-1.289-.614-1.458-1.26l-.289-1.106c-.018-.066-.079-.158-.212-.224a5.738 5.738 0 0 1-.668-.386c-.123-.082-.233-.09-.299-.071l-1.103.303c-.644.176-1.392-.021-1.82-.63a8.12 8.12 0 0 1-.704-1.218c-.315-.675-.111-1.422.363-1.891l.815-.806c.05-.048.098-.147.088-.294a6.214 6.214 0 0 1 0-.772c.01-.147-.038-.246-.088-.294l-.815-.806C.635 6.045.431 5.298.746 4.623a7.92 7.92 0 0 1 .704-1.217c.428-.61 1.176-.807 1.82-.63l1.102.302c.067.019.177.011.3-.071.214-.143.437-.272.668-.386.133-.066.194-.158.211-.224l.29-1.106C6.009.645 6.556.095 7.299.03 7.53.01 7.764 0 8 0Zm-.571 1.525c-.036.003-.108.036-.137.146l-.289 1.105c-.147.561-.549.967-.998 1.189-.173.086-.34.183-.5.29-.417.278-.97.423-1.529.27l-1.103-.303c-.109-.03-.175.016-.195.045-.22.312-.412.644-.573.99-.014.031-.021.11.059.19l.815.806c.411.406.562.957.53 1.456a4.709 4.709 0 0 0 0 .582c.032.499-.119 1.05-.53 1.456l-.815.806c-.081.08-.073.159-.059.19.162.346.353.677.573.989.02.03.085.076.195.046l1.102-.303c.56-.153 1.113-.008 1.53.27.161.107.328.204.501.29.447.222.85.629.997 1.189l.289 1.105c.029.109.101.143.137.146a6.6 6.6 0 0 0 1.142 0c.036-.003.108-.036.137-.146l.289-1.105c.147-.561.549-.967.998-1.189.173-.086.34-.183.5-.29.417-.278.97-.423 1.529-.27l1.103.303c.109.029.175-.016.195-.045.22-.313.411-.644.573-.99.014-.031.021-.11-.059-.19l-.815-.806c-.411-.406-.562-.957-.53-1.456a4.709 4.709 0 0 0 0-.582c-.032-.499.119-1.05.53-1.456l.815-.806c.081-.08.073-.159.059-.19a6.464 6.464 0 0 0-.573-.989c-.02-.03-.085-.076-.195-.046l-1.102.303c-.56.153-1.113.008-1.53-.27a4.44 4.44 0 0 0-.501-.29c-.447-.222-.85-.629-.997-1.189l-.289-1.105c-.029-.11-.101-.143-.137-.146a6.6 6.6 0 0 0-1.142 0ZM11 8a3 3 0 1 1-6 0 3 3 0 0 1 6 0ZM9.5 8a1.5 1.5 0 1 0-3.001.001A1.5 1.5 0 0 0 9.5 8Z"/></svg>
<svg class="i" style="left:1512.5px;top:893.5px" width="43.0" height="43.0" viewBox="-2.4000000000000004 -2.4000000000000004 68.8 68.8"><defs><clipPath id="fc15"><circle cx="32" cy="32" r="32"/></clipPath><linearGradient id="fc15g" x1="0" x2="1" y1="0" y2="0"><stop offset="0" stop-color="#c8c8c4"/><stop offset="0.6" stop-color="#d9d9d5"/><stop offset="1" stop-color="#e2e2de"/></linearGradient><radialGradient id="fc15s" cx="0.45" cy="0.4" r="0.7"><stop offset="0" stop-color="#f0a58c"/><stop offset="0.7" stop-color="#e48f77"/><stop offset="1" stop-color="#cf7a64"/></radialGradient><filter id="fc15b" x="-10%" y="-10%" width="120%" height="120%"><feGaussianBlur stdDeviation="0.7"/></filter></defs><circle cx="32" cy="32" r="34.4" fill="#d0d7de"/><g clip-path="url(#fc15)"><rect width="64" height="64" fill="url(#fc15g)"/><g filter="url(#fc15b)"><path d="M38 52 L46.500 46 L57 52.500 L62 66 L26 70 Z" fill="#a9c3e3"/><path d="M15 66 L18.500 57 L23 53 L30 66 Z" fill="#9db6d8"/><path d="M21 45 L41 45 L42.500 53 L33 63 L25 60 L21 53 Z" fill="#d27f66"/><path d="M37 52 L45 47.500 L36 63 Z" fill="#bcd1ea"/><ellipse cx="13.600" cy="30" rx="2.600" ry="5.500" fill="#df8c74"/><ellipse cx="47.600" cy="30" rx="2.600" ry="5.500" fill="#df8c74"/><path d="M15 26 Q14.500 9 30.500 9 Q46.500 9 46 26 Q46.500 38 41 46 Q36 53 31 53 Q25 53 20.500 46 Q15 38 15 26 Z" fill="url(#fc15s)"/><path d="M14.800 28 Q11 4 30 1.600 Q50 1 47 28 Q46 20 43.500 15.500 Q37 10.500 30 10.800 Q22 11 18 15.500 Q15.500 20 14.800 28 Z" fill="#85634b"/><path d="M20.500 23.500 Q23.500 22 27 23.300 M33.500 23.300 Q37 22 40.500 23.500" stroke="#a0705a" stroke-width="1.200" fill="none"/><ellipse cx="24" cy="26.300" rx="2.300" ry="1.100" fill="#56627a"/><ellipse cx="36.500" cy="26.300" rx="2.300" ry="1.100" fill="#56627a"/><path d="M29 27 Q28 33 29.500 34.500 L33 34.500" stroke="#cf7a64" stroke-width="1.200" fill="none"/><path d="M23.500 38.500 Q30.500 41 37.500 38 Q35.500 43.500 30.500 43.500 Q25.500 43.500 23.500 38.500 Z" fill="#a8453d"/><path d="M25.500 39.600 Q30.500 41.300 36 39.400 Q34 41.800 30.500 41.800 Q27 41.800 25.500 39.600 Z" fill="#f1ddd0"/></g></g></svg>
<span class="t" style="left:1563.3500000000001px;top:904.78px;font-size:24px;color:#1f2328;-webkit-text-stroke:0.9px #1f2328;letter-spacing:0.110px">fpahlke</span>
<div class="b" style="left:1514px;top:967px;width:592px;height:2px;background:#dde3e8"></div>
<span class="t" style="left:1513.75px;top:1009.28px;font-size:24px;color:#59636e;-webkit-text-stroke:0.9px #59636e;letter-spacing:-0.625px">Labels</span>
<svg class="i" style="left:2074px;top:1001px" width="32" height="32" viewBox="0 0 16 16" fill="#59636e"><path fill-rule="evenodd" d="M8 0a8.2 8.2 0 0 1 .701.031C9.444.095 9.99.645 10.16 1.29l.288 1.107c.018.066.079.158.212.224.231.114.454.243.668.386.123.082.233.09.299.071l1.103-.303c.644-.176 1.392.021 1.82.63.27.385.506.792.704 1.218.315.675.111 1.422-.364 1.891l-.814.806c-.049.048-.098.147-.088.294.016.257.016.515 0 .772-.01.147.038.246.088.294l.814.806c.475.469.679 1.216.364 1.891a7.977 7.977 0 0 1-.704 1.217c-.428.61-1.176.807-1.82.63l-1.102-.302c-.067-.019-.177-.011-.3.071a5.909 5.909 0 0 1-.668.386c-.133.066-.194.158-.211.224l-.29 1.106c-.168.646-.715 1.196-1.458 1.26a8.006 8.006 0 0 1-1.402 0c-.743-.064-1.289-.614-1.458-1.26l-.289-1.106c-.018-.066-.079-.158-.212-.224a5.738 5.738 0 0 1-.668-.386c-.123-.082-.233-.09-.299-.071l-1.103.303c-.644.176-1.392-.021-1.82-.63a8.12 8.12 0 0 1-.704-1.218c-.315-.675-.111-1.422.363-1.891l.815-.806c.05-.048.098-.147.088-.294a6.214 6.214 0 0 1 0-.772c.01-.147-.038-.246-.088-.294l-.815-.806C.635 6.045.431 5.298.746 4.623a7.92 7.92 0 0 1 .704-1.217c.428-.61 1.176-.807 1.82-.63l1.102.302c.067.019.177.011.3-.071.214-.143.437-.272.668-.386.133-.066.194-.158.211-.224l.29-1.106C6.009.645 6.556.095 7.299.03 7.53.01 7.764 0 8 0Zm-.571 1.525c-.036.003-.108.036-.137.146l-.289 1.105c-.147.561-.549.967-.998 1.189-.173.086-.34.183-.5.29-.417.278-.97.423-1.529.27l-1.103-.303c-.109-.03-.175.016-.195.045-.22.312-.412.644-.573.99-.014.031-.021.11.059.19l.815.806c.411.406.562.957.53 1.456a4.709 4.709 0 0 0 0 .582c.032.499-.119 1.05-.53 1.456l-.815.806c-.081.08-.073.159-.059.19.162.346.353.677.573.989.02.03.085.076.195.046l1.102-.303c.56-.153 1.113-.008 1.53.27.161.107.328.204.501.29.447.222.85.629.997 1.189l.289 1.105c.029.109.101.143.137.146a6.6 6.6 0 0 0 1.142 0c.036-.003.108-.036.137-.146l.289-1.105c.147-.561.549-.967.998-1.189.173-.086.34-.183.5-.29.417-.278.97-.423 1.529-.27l1.103.303c.109.029.175-.016.195-.045.22-.313.411-.644.573-.99.014-.031.021-.11-.059-.19l-.815-.806c-.411-.406-.562-.957-.53-1.456a4.709 4.709 0 0 0 0-.582c-.032-.499.119-1.05.53-1.456l.815-.806c.081-.08.073-.159.059-.19a6.464 6.464 0 0 0-.573-.989c-.02-.03-.085-.076-.195-.046l-1.102.303c-.56.153-1.113.008-1.53-.27a4.44 4.44 0 0 0-.501-.29c-.447-.222-.85-.629-.997-1.189l-.289-1.105c-.029-.11-.101-.143-.137-.146a6.6 6.6 0 0 0-1.142 0ZM11 8a3 3 0 1 1-6 0 3 3 0 0 1 6 0ZM9.5 8a1.5 1.5 0 1 0-3.001.001A1.5 1.5 0 0 0 9.5 8Z"/></svg>
<div class="b" style="left:1514px;top:1053px;width:180px;height:40px;background:#a2eeef;border-radius:20px"></div>
<span class="t" style="left:1529.45px;top:1062.28px;font-size:24px;color:#0a0c0d;-webkit-text-stroke:0.9px #0a0c0d;letter-spacing:0.233px">enhancement</span>
<div class="b" style="left:1514px;top:1133px;width:592px;height:2px;background:#dde3e8"></div>
<span class="t" style="left:1513.75px;top:1174.68px;font-size:24px;color:#59636e;-webkit-text-stroke:0.9px #59636e;letter-spacing:-0.128px">Projects</span>
<svg class="i" style="left:2074px;top:1166.7px" width="32" height="32" viewBox="0 0 16 16" fill="#59636e"><path fill-rule="evenodd" d="M8 0a8.2 8.2 0 0 1 .701.031C9.444.095 9.99.645 10.16 1.29l.288 1.107c.018.066.079.158.212.224.231.114.454.243.668.386.123.082.233.09.299.071l1.103-.303c.644-.176 1.392.021 1.82.63.27.385.506.792.704 1.218.315.675.111 1.422-.364 1.891l-.814.806c-.049.048-.098.147-.088.294.016.257.016.515 0 .772-.01.147.038.246.088.294l.814.806c.475.469.679 1.216.364 1.891a7.977 7.977 0 0 1-.704 1.217c-.428.61-1.176.807-1.82.63l-1.102-.302c-.067-.019-.177-.011-.3.071a5.909 5.909 0 0 1-.668.386c-.133.066-.194.158-.211.224l-.29 1.106c-.168.646-.715 1.196-1.458 1.26a8.006 8.006 0 0 1-1.402 0c-.743-.064-1.289-.614-1.458-1.26l-.289-1.106c-.018-.066-.079-.158-.212-.224a5.738 5.738 0 0 1-.668-.386c-.123-.082-.233-.09-.299-.071l-1.103.303c-.644.176-1.392-.021-1.82-.63a8.12 8.12 0 0 1-.704-1.218c-.315-.675-.111-1.422.363-1.891l.815-.806c.05-.048.098-.147.088-.294a6.214 6.214 0 0 1 0-.772c.01-.147-.038-.246-.088-.294l-.815-.806C.635 6.045.431 5.298.746 4.623a7.92 7.92 0 0 1 .704-1.217c.428-.61 1.176-.807 1.82-.63l1.102.302c.067.019.177.011.3-.071.214-.143.437-.272.668-.386.133-.066.194-.158.211-.224l.29-1.106C6.009.645 6.556.095 7.299.03 7.53.01 7.764 0 8 0Zm-.571 1.525c-.036.003-.108.036-.137.146l-.289 1.105c-.147.561-.549.967-.998 1.189-.173.086-.34.183-.5.29-.417.278-.97.423-1.529.27l-1.103-.303c-.109-.03-.175.016-.195.045-.22.312-.412.644-.573.99-.014.031-.021.11.059.19l.815.806c.411.406.562.957.53 1.456a4.709 4.709 0 0 0 0 .582c.032.499-.119 1.05-.53 1.456l-.815.806c-.081.08-.073.159-.059.19.162.346.353.677.573.989.02.03.085.076.195.046l1.102-.303c.56-.153 1.113-.008 1.53.27.161.107.328.204.501.29.447.222.85.629.997 1.189l.289 1.105c.029.109.101.143.137.146a6.6 6.6 0 0 0 1.142 0c.036-.003.108-.036.137-.146l.289-1.105c.147-.561.549-.967.998-1.189.173-.086.34-.183.5-.29.417-.278.97-.423 1.529-.27l1.103.303c.109.029.175-.016.195-.045.22-.313.411-.644.573-.99.014-.031.021-.11-.059-.19l-.815-.806c-.411-.406-.562-.957-.53-1.456a4.709 4.709 0 0 0 0-.582c-.032-.499.119-1.05.53-1.456l.815-.806c.081-.08.073-.159.059-.19a6.464 6.464 0 0 0-.573-.989c-.02-.03-.085-.076-.195-.046l-1.102.303c-.56.153-1.113.008-1.53-.27a4.44 4.44 0 0 0-.501-.29c-.447-.222-.85-.629-.997-1.189l-.289-1.105c-.029-.11-.101-.143-.137-.146a6.6 6.6 0 0 0-1.142 0ZM11 8a3 3 0 1 1-6 0 3 3 0 0 1 6 0ZM9.5 8a1.5 1.5 0 1 0-3.001.001A1.5 1.5 0 0 0 9.5 8Z"/></svg>
<span class="t" style="left:1513.3px;top:1226.98px;font-size:24px;color:#1f2328;letter-spacing:0.230px">None yet</span>
<div class="b" style="left:1514px;top:1286.5px;width:592px;height:2px;background:#dde3e8"></div>
<span class="t" style="left:1513.75px;top:1328.18px;font-size:24px;color:#59636e;-webkit-text-stroke:0.9px #59636e;letter-spacing:0.592px">Milestone</span>
<svg class="i" style="left:2074px;top:1320.8px" width="32" height="32" viewBox="0 0 16 16" fill="#59636e"><path fill-rule="evenodd" d="M8 0a8.2 8.2 0 0 1 .701.031C9.444.095 9.99.645 10.16 1.29l.288 1.107c.018.066.079.158.212.224.231.114.454.243.668.386.123.082.233.09.299.071l1.103-.303c.644-.176 1.392.021 1.82.63.27.385.506.792.704 1.218.315.675.111 1.422-.364 1.891l-.814.806c-.049.048-.098.147-.088.294.016.257.016.515 0 .772-.01.147.038.246.088.294l.814.806c.475.469.679 1.216.364 1.891a7.977 7.977 0 0 1-.704 1.217c-.428.61-1.176.807-1.82.63l-1.102-.302c-.067-.019-.177-.011-.3.071a5.909 5.909 0 0 1-.668.386c-.133.066-.194.158-.211.224l-.29 1.106c-.168.646-.715 1.196-1.458 1.26a8.006 8.006 0 0 1-1.402 0c-.743-.064-1.289-.614-1.458-1.26l-.289-1.106c-.018-.066-.079-.158-.212-.224a5.738 5.738 0 0 1-.668-.386c-.123-.082-.233-.09-.299-.071l-1.103.303c-.644.176-1.392-.021-1.82-.63a8.12 8.12 0 0 1-.704-1.218c-.315-.675-.111-1.422.363-1.891l.815-.806c.05-.048.098-.147.088-.294a6.214 6.214 0 0 1 0-.772c.01-.147-.038-.246-.088-.294l-.815-.806C.635 6.045.431 5.298.746 4.623a7.92 7.92 0 0 1 .704-1.217c.428-.61 1.176-.807 1.82-.63l1.102.302c.067.019.177.011.3-.071.214-.143.437-.272.668-.386.133-.066.194-.158.211-.224l.29-1.106C6.009.645 6.556.095 7.299.03 7.53.01 7.764 0 8 0Zm-.571 1.525c-.036.003-.108.036-.137.146l-.289 1.105c-.147.561-.549.967-.998 1.189-.173.086-.34.183-.5.29-.417.278-.97.423-1.529.27l-1.103-.303c-.109-.03-.175.016-.195.045-.22.312-.412.644-.573.99-.014.031-.021.11.059.19l.815.806c.411.406.562.957.53 1.456a4.709 4.709 0 0 0 0 .582c.032.499-.119 1.05-.53 1.456l-.815.806c-.081.08-.073.159-.059.19.162.346.353.677.573.989.02.03.085.076.195.046l1.102-.303c.56-.153 1.113-.008 1.53.27.161.107.328.204.501.29.447.222.85.629.997 1.189l.289 1.105c.029.109.101.143.137.146a6.6 6.6 0 0 0 1.142 0c.036-.003.108-.036.137-.146l.289-1.105c.147-.561.549-.967.998-1.189.173-.086.34-.183.5-.29.417-.278.97-.423 1.529-.27l1.103.303c.109.029.175-.016.195-.045.22-.313.411-.644.573-.99.014-.031.021-.11-.059-.19l-.815-.806c-.411-.406-.562-.957-.53-1.456a4.709 4.709 0 0 0 0-.582c-.032-.499.119-1.05.53-1.456l.815-.806c.081-.08.073-.159.059-.19a6.464 6.464 0 0 0-.573-.989c-.02-.03-.085-.076-.195-.046l-1.102.303c-.56.153-1.113.008-1.53-.27a4.44 4.44 0 0 0-.501-.29c-.447-.222-.85-.629-.997-1.189l-.289-1.105c-.029-.11-.101-.143-.137-.146a6.6 6.6 0 0 0-1.142 0ZM11 8a3 3 0 1 1-6 0 3 3 0 0 1 6 0ZM9.5 8a1.5 1.5 0 1 0-3.001.001A1.5 1.5 0 0 0 9.5 8Z"/></svg>
<span class="t" style="left:1513.3px;top:1380.48px;font-size:24px;color:#1f2328;letter-spacing:0.271px">No milestone</span>
<div class="b" style="left:1514px;top:1440.8px;width:592px;height:2px;background:#dde3e8"></div>
<span class="t" style="left:1513.75px;top:1482.58px;font-size:24px;color:#59636e;-webkit-text-stroke:0.9px #59636e;letter-spacing:0.436px">Development</span>
<svg class="i" style="left:2074px;top:1475.3px" width="32" height="32" viewBox="0 0 16 16" fill="#59636e"><path fill-rule="evenodd" d="M8 0a8.2 8.2 0 0 1 .701.031C9.444.095 9.99.645 10.16 1.29l.288 1.107c.018.066.079.158.212.224.231.114.454.243.668.386.123.082.233.09.299.071l1.103-.303c.644-.176 1.392.021 1.82.63.27.385.506.792.704 1.218.315.675.111 1.422-.364 1.891l-.814.806c-.049.048-.098.147-.088.294.016.257.016.515 0 .772-.01.147.038.246.088.294l.814.806c.475.469.679 1.216.364 1.891a7.977 7.977 0 0 1-.704 1.217c-.428.61-1.176.807-1.82.63l-1.102-.302c-.067-.019-.177-.011-.3.071a5.909 5.909 0 0 1-.668.386c-.133.066-.194.158-.211.224l-.29 1.106c-.168.646-.715 1.196-1.458 1.26a8.006 8.006 0 0 1-1.402 0c-.743-.064-1.289-.614-1.458-1.26l-.289-1.106c-.018-.066-.079-.158-.212-.224a5.738 5.738 0 0 1-.668-.386c-.123-.082-.233-.09-.299-.071l-1.103.303c-.644.176-1.392-.021-1.82-.63a8.12 8.12 0 0 1-.704-1.218c-.315-.675-.111-1.422.363-1.891l.815-.806c.05-.048.098-.147.088-.294a6.214 6.214 0 0 1 0-.772c.01-.147-.038-.246-.088-.294l-.815-.806C.635 6.045.431 5.298.746 4.623a7.92 7.92 0 0 1 .704-1.217c.428-.61 1.176-.807 1.82-.63l1.102.302c.067.019.177.011.3-.071.214-.143.437-.272.668-.386.133-.066.194-.158.211-.224l.29-1.106C6.009.645 6.556.095 7.299.03 7.53.01 7.764 0 8 0Zm-.571 1.525c-.036.003-.108.036-.137.146l-.289 1.105c-.147.561-.549.967-.998 1.189-.173.086-.34.183-.5.29-.417.278-.97.423-1.529.27l-1.103-.303c-.109-.03-.175.016-.195.045-.22.312-.412.644-.573.99-.014.031-.021.11.059.19l.815.806c.411.406.562.957.53 1.456a4.709 4.709 0 0 0 0 .582c.032.499-.119 1.05-.53 1.456l-.815.806c-.081.08-.073.159-.059.19.162.346.353.677.573.989.02.03.085.076.195.046l1.102-.303c.56-.153 1.113-.008 1.53.27.161.107.328.204.501.29.447.222.85.629.997 1.189l.289 1.105c.029.109.101.143.137.146a6.6 6.6 0 0 0 1.142 0c.036-.003.108-.036.137-.146l.289-1.105c.147-.561.549-.967.998-1.189.173-.086.34-.183.5-.29.417-.278.97-.423 1.529-.27l1.103.303c.109.029.175-.016.195-.045.22-.313.411-.644.573-.99.014-.031.021-.11-.059-.19l-.815-.806c-.411-.406-.562-.957-.53-1.456a4.709 4.709 0 0 0 0-.582c-.032-.499.119-1.05.53-1.456l.815-.806c.081-.08.073-.159.059-.19a6.464 6.464 0 0 0-.573-.989c-.02-.03-.085-.076-.195-.046l-1.102.303c-.56.153-1.113.008-1.53-.27a4.44 4.44 0 0 0-.501-.29c-.447-.222-.85-.629-.997-1.189l-.289-1.105c-.029-.11-.101-.143-.137-.146a6.6 6.6 0 0 0-1.142 0ZM11 8a3 3 0 1 1-6 0 3 3 0 0 1 6 0ZM9.5 8a1.5 1.5 0 1 0-3.001.001A1.5 1.5 0 0 0 9.5 8Z"/></svg>
<span class="t" style="left:1513.3px;top:1535.18px;font-size:24px;color:#1f2328;letter-spacing:-0.150px">Successfully merging this pull request may close these</span>
<span class="t" style="left:1513.3px;top:1570.68px;font-size:24px;color:#1f2328;letter-spacing:-0.755px">issues.</span>
<span class="t" style="left:1513.3px;top:1627.08px;font-size:24px;color:#1f2328;letter-spacing:0.230px">None yet</span>
<div class="b" style="left:1514px;top:1686.5px;width:592px;height:2px;background:#dde3e8"></div>
<span class="t" style="left:1513.75px;top:1728.28px;font-size:24px;color:#59636e;-webkit-text-stroke:0.9px #59636e;letter-spacing:0.723px">Notifications</span>
<span class="t" style="left:1994.9px;top:1728.28px;font-size:24px;color:#59636e;letter-spacing:-0.290px">Customize</span>
<div class="b" style="left:1514px;top:1773px;width:592px;height:56px;border:2px solid #d1d9e0;border-radius:12px;background:#f6f8fa"></div>
<svg class="i" style="left:1723px;top:1784.5px" width="32" height="32" viewBox="0 0 16 16" fill="#25292e"><path fill-rule="evenodd" d="m4.182 4.31.016.011 10.104 7.316.013.01 1.375.996a.75.75 0 1 1-.88 1.214L13.626 13H2.518a1.516 1.516 0 0 1-1.263-2.36l1.703-2.554A.255.255 0 0 0 3 7.947V5.305L.31 3.357a.75.75 0 1 1 .88-1.214Zm7.373 7.19L4.5 6.391v1.556c0 .346-.102.683-.294.97l-1.703 2.556a.017.017 0 0 0-.003.01c0 .005.002.009.005.012l.006.004.007.001ZM8 1.5c-.997 0-1.895.416-2.534 1.086A.75.75 0 1 1 4.38 1.55 5 5 0 0 1 13 5v2.373a.75.75 0 0 1-1.5 0V5A3.5 3.5 0 0 0 8 1.5ZM8 16a2 2 0 0 1-1.985-1.75c-.017-.137.097-.25.235-.25h3.5c.138 0 .252.113.235.25A2 2 0 0 1 8 16Z"/></svg>
<span class="t" style="left:1763.45px;top:1790.08px;font-size:24px;color:#25292e;-webkit-text-stroke:0.9px #25292e;letter-spacing:-0.065px">Unsubscribe</span>
</body></html>
